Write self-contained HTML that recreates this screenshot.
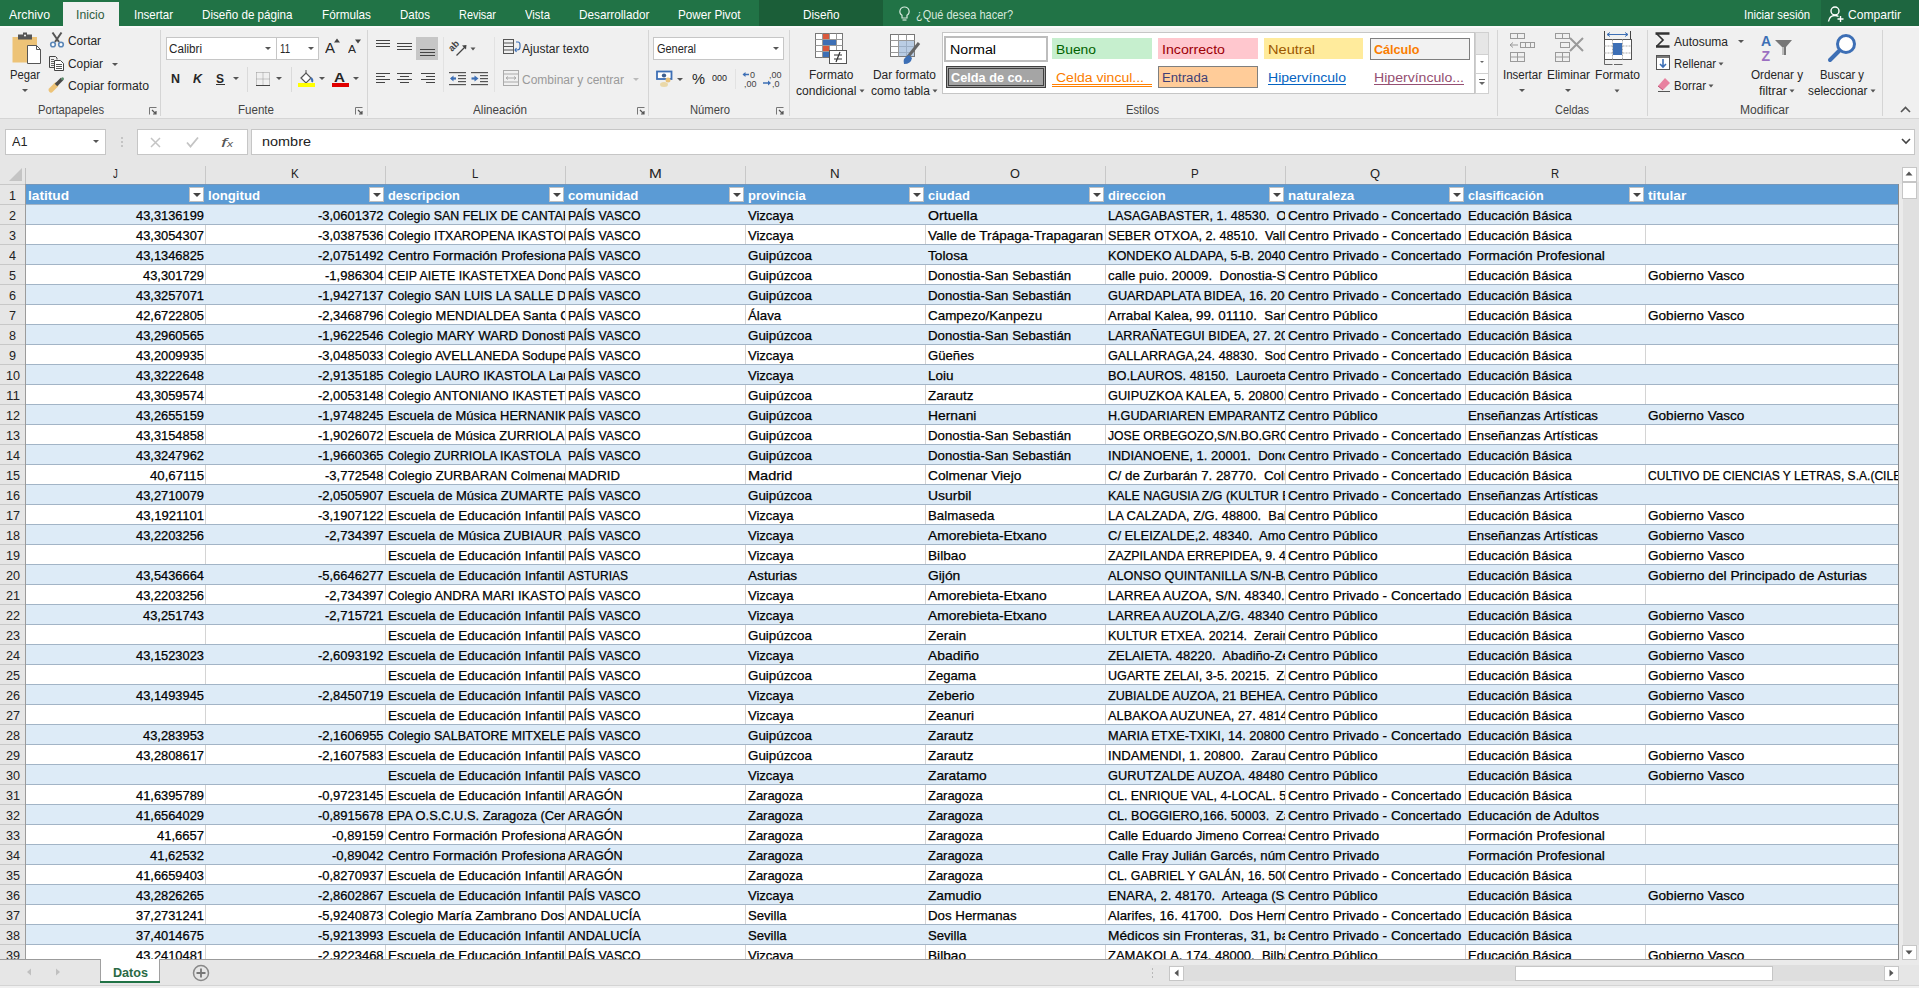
<!DOCTYPE html>
<html><head><meta charset="utf-8"><title>Excel</title>
<style>
html,body{margin:0;padding:0;width:1919px;height:988px;overflow:hidden;background:#E6E6E6;font-family:'Liberation Sans', sans-serif;}
.a{position:absolute;}
.t{position:absolute;white-space:pre;transform-origin:0 0;}
svg{position:absolute;overflow:visible;}
</style></head><body>
<div class="a" style="left:0px;top:0px;width:1919px;height:26px;background:#217346;"></div><div class="a" style="left:759px;top:0px;width:124px;height:26px;background:#1B5E38;"></div><div class="a" style="left:1821px;top:0px;width:98px;height:26px;background:#1E6640;"></div><div class="a" style="left:0px;top:26px;width:1919px;height:92px;background:#F0F0F0;"></div><div class="a" style="left:0px;top:26px;width:1919px;height:2px;background:#F9F9F9;"></div><div class="a" style="left:0px;top:118px;width:1919px;height:1px;background:#D5D5D5;"></div><div class="a" style="left:0px;top:119px;width:1919px;height:44px;background:#E6E6E6;"></div><div class="a" style="left:63px;top:2px;width:56px;height:26px;background:#F0F0F0;"></div><div class="t" style="left:9.00px;top:8.00px;font-size:13.0px;line-height:13.0px;color:#FFFFFF;transform:scaleX(0.9456);">Archivo</div><div class="t" style="left:76.00px;top:8.00px;font-size:13.0px;line-height:13.0px;color:#2E5D40;transform:scaleX(0.9388);">Inicio</div><div class="t" style="left:134.00px;top:8.00px;font-size:13.0px;line-height:13.0px;color:#FFFFFF;transform:scaleX(0.8848);">Insertar</div><div class="t" style="left:202.00px;top:8.00px;font-size:13.0px;line-height:13.0px;color:#FFFFFF;transform:scaleX(0.8942);">Diseño de página</div><div class="t" style="left:322.00px;top:8.00px;font-size:13.0px;line-height:13.0px;color:#FFFFFF;transform:scaleX(0.9043);">Fórmulas</div><div class="t" style="left:400.00px;top:8.00px;font-size:13.0px;line-height:13.0px;color:#FFFFFF;transform:scaleX(0.8832);">Datos</div><div class="t" style="left:459.00px;top:8.00px;font-size:13.0px;line-height:13.0px;color:#FFFFFF;transform:scaleX(0.8394);">Revisar</div><div class="t" style="left:524.50px;top:8.00px;font-size:13.0px;line-height:13.0px;color:#FFFFFF;transform:scaleX(0.8719);">Vista</div><div class="t" style="left:579.00px;top:8.00px;font-size:13.0px;line-height:13.0px;color:#FFFFFF;transform:scaleX(0.9033);">Desarrollador</div><div class="t" style="left:678.00px;top:8.00px;font-size:13.0px;line-height:13.0px;color:#FFFFFF;transform:scaleX(0.9009);">Power Pivot</div><div class="t" style="left:802.50px;top:8.00px;font-size:13.0px;line-height:13.0px;color:#FFFFFF;transform:scaleX(0.9019);">Diseño</div><svg style="left:899px;top:6px" width="11" height="16" viewBox="0 0 11 16"><path d="M5.5 1A4.5 4.5 0 0 0 3 9.3V12H8V9.3A4.5 4.5 0 0 0 5.5 1Z" fill="none" stroke="#D5E8DC" stroke-width="1.2"/><path d="M3.5 14H7.5" stroke="#D5E8DC" stroke-width="1.2"/></svg><div class="t" style="left:916.00px;top:8.00px;font-size:13.0px;line-height:13.0px;color:#D5E8DC;transform:scaleX(0.8442);">¿Qué desea hacer?</div><div class="t" style="left:1744.00px;top:8.00px;font-size:13.0px;line-height:13.0px;color:#FFFFFF;transform:scaleX(0.8699);">Iniciar sesión</div><svg style="left:1827px;top:6px" width="18" height="16" viewBox="0 0 18 16"><circle cx="8" cy="5" r="4" fill="none" stroke="#FFF" stroke-width="1.4"/><path d="M1.5 15.5Q2.5 9.5 8 9.5Q10 9.5 11.5 10.5" fill="none" stroke="#FFF" stroke-width="1.4"/><path d="M13.5 10V16M10.5 13H16.5" stroke="#FFF" stroke-width="1.4"/></svg><div class="t" style="left:1848.00px;top:8.00px;font-size:13.0px;line-height:13.0px;color:#FFFFFF;transform:scaleX(0.9286);">Compartir</div><div class="a" style="left:160px;top:30px;width:1px;height:86px;background:#D5D5D5;"></div><div class="a" style="left:367px;top:30px;width:1px;height:86px;background:#D5D5D5;"></div><div class="a" style="left:648px;top:30px;width:1px;height:86px;background:#D5D5D5;"></div><div class="a" style="left:789px;top:30px;width:1px;height:86px;background:#D5D5D5;"></div><div class="a" style="left:1497px;top:30px;width:1px;height:86px;background:#D5D5D5;"></div><div class="a" style="left:1647px;top:30px;width:1px;height:86px;background:#D5D5D5;"></div><div class="a" style="left:1882px;top:30px;width:1px;height:86px;background:#D5D5D5;"></div><div class="t" style="left:38.00px;top:103.84px;font-size:12.0px;line-height:12.0px;color:#444444;transform:scaleX(0.9333);">Portapapeles</div><div class="t" style="left:238.00px;top:103.84px;font-size:12.0px;line-height:12.0px;color:#444444;transform:scaleX(0.9636);">Fuente</div><div class="t" style="left:473.00px;top:103.84px;font-size:12.0px;line-height:12.0px;color:#444444;transform:scaleX(0.9752);">Alineación</div><div class="t" style="left:690.00px;top:103.84px;font-size:12.0px;line-height:12.0px;color:#444444;transform:scaleX(0.9370);">Número</div><div class="t" style="left:1126.00px;top:103.84px;font-size:12.0px;line-height:12.0px;color:#444444;transform:scaleX(0.9337);">Estilos</div><div class="t" style="left:1555.00px;top:103.84px;font-size:12.0px;line-height:12.0px;color:#444444;transform:scaleX(0.9101);">Celdas</div><div class="t" style="left:1740.00px;top:103.84px;font-size:12.0px;line-height:12.0px;color:#444444;transform:scaleX(1.0064);">Modificar</div><svg style="left:149px;top:107px" width="8" height="8" viewBox="0 0 8 8"><path d="M0.5 7.5V0.5H7.5" fill="none" stroke="#777" stroke-width="1"/><path d="M3 3L7 7M7 4V7H4" fill="none" stroke="#555" stroke-width="1.2"/></svg><svg style="left:355px;top:107px" width="8" height="8" viewBox="0 0 8 8"><path d="M0.5 7.5V0.5H7.5" fill="none" stroke="#777" stroke-width="1"/><path d="M3 3L7 7M7 4V7H4" fill="none" stroke="#555" stroke-width="1.2"/></svg><svg style="left:637px;top:107px" width="8" height="8" viewBox="0 0 8 8"><path d="M0.5 7.5V0.5H7.5" fill="none" stroke="#777" stroke-width="1"/><path d="M3 3L7 7M7 4V7H4" fill="none" stroke="#555" stroke-width="1.2"/></svg><svg style="left:776px;top:107px" width="8" height="8" viewBox="0 0 8 8"><path d="M0.5 7.5V0.5H7.5" fill="none" stroke="#777" stroke-width="1"/><path d="M3 3L7 7M7 4V7H4" fill="none" stroke="#555" stroke-width="1.2"/></svg><svg style="left:1900px;top:106px" width="11" height="7" viewBox="0 0 11 7"><path d="M1 6L5.5 1.5L10 6" fill="none" stroke="#555" stroke-width="1.6"/></svg><svg style="left:12px;top:32px" width="30" height="33" viewBox="0 0 30 33"><rect x="0.5" y="5" width="24.5" height="25.5" fill="#EDC377"/><rect x="6" y="2.5" width="14" height="5" fill="#555"/><rect x="11" y="0.5" width="4" height="3" fill="#555"/><circle cx="13" cy="3.5" r="1" fill="#FFF"/><path d="M15.5 13.5H24.5L28.5 17.5V31.5H15.5Z" fill="#FFF" stroke="#555"/><path d="M24.5 13.5V17.5H28.5" fill="none" stroke="#555"/></svg><div class="t" style="left:10.00px;top:68.84px;font-size:12.0px;line-height:12.0px;color:#262626;transform:scaleX(0.9366);">Pegar</div><div class="a" style="left:22px;top:89px;width:0;height:0;border-left:3px solid transparent;border-right:3px solid transparent;border-top:3px solid #555"></div><svg style="left:49px;top:32px" width="16" height="16" viewBox="0 0 16 16"><path d="M3.5 0.5L10 10M12.5 0.5L6 10" stroke="#555" stroke-width="2" fill="none"/><circle cx="4" cy="12.5" r="2.3" fill="#FFF" stroke="#5B87B8" stroke-width="1.6"/><circle cx="12" cy="12.5" r="2.3" fill="#FFF" stroke="#5B87B8" stroke-width="1.6"/></svg><div class="t" style="left:68.00px;top:34.84px;font-size:12.0px;line-height:12.0px;color:#262626;transform:scaleX(0.9897);">Cortar</div><svg style="left:49px;top:56px" width="16" height="15" viewBox="0 0 16 15"><path d="M0.5 0.5H6.5L8 2V3.5M0.5 0.5V11.5H5" fill="none" stroke="#444"/><path d="M2 3.5H5M2 5.5H5M2 7.5H5M2 9.5H5" stroke="#666"/><path d="M5.5 4.5H11.5L14.5 7.5V14.5H5.5Z" fill="#FFF" stroke="#444"/><path d="M7 8.5H13M7 10.5H13M7 12.5H13" stroke="#555"/></svg><div class="t" style="left:68.00px;top:57.84px;font-size:12.0px;line-height:12.0px;color:#262626;transform:scaleX(0.9898);">Copiar</div><div class="a" style="left:112px;top:63px;width:0;height:0;border-left:3px solid transparent;border-right:3px solid transparent;border-top:3px solid #555"></div><svg style="left:49px;top:77px" width="16" height="15" viewBox="0 0 16 15"><path d="M2 13L7 8" stroke="#EDC377" stroke-width="5" stroke-linecap="round"/><path d="M7 8L13 2" stroke="#4A4A4A" stroke-width="3.5"/><circle cx="13.5" cy="1.8" r="1.5" fill="#5A8A6A"/></svg><div class="t" style="left:68.00px;top:79.84px;font-size:12.0px;line-height:12.0px;color:#262626;transform:scaleX(1.0205);">Copiar formato</div><div class="a" style="left:166px;top:37px;width:153px;height:23px;background:#FFFFFF;border:1px solid #C6C6C6;box-sizing:border-box;"></div><div class="a" style="left:276px;top:38px;width:1px;height:21px;background:#C6C6C6;"></div><div class="t" style="left:169.00px;top:42.84px;font-size:12.0px;line-height:12.0px;color:#262626;transform:scaleX(0.9701);">Calibri</div><div class="a" style="left:265px;top:47px;width:0;height:0;border-left:3px solid transparent;border-right:3px solid transparent;border-top:3px solid #555"></div><div class="t" style="left:280.00px;top:42.84px;font-size:12.0px;line-height:12.0px;color:#262626;transform:scaleX(0.8020);">11</div><div class="a" style="left:308px;top:47px;width:0;height:0;border-left:3px solid transparent;border-right:3px solid transparent;border-top:3px solid #555"></div><div class="t" style="left:325.00px;top:41.15px;font-size:14px;line-height:14px;color:#262626;transform:scaleX(1.0702);">A</div><svg style="left:334px;top:38px" width="6" height="5" viewBox="0 0 6 5"><path d="M0 4.5L3 0.5L6 4.5Z" fill="#444"/></svg><div class="t" style="left:348.00px;top:43.69px;font-size:11px;line-height:11px;color:#262626;transform:scaleX(1.0894);">A</div><svg style="left:355px;top:39px" width="6" height="5" viewBox="0 0 6 5"><path d="M0 0.5L3 4.5L6 0.5Z" fill="#444"/></svg><div class="t" style="left:171.00px;top:72.00px;font-size:13px;line-height:13px;color:#262626;font-weight:700;transform:scaleX(0.9584);">N</div><div class="t" style="left:193.00px;top:72.00px;font-size:13px;line-height:13px;color:#262626;font-weight:700;transform:scaleX(0.9584);font-style:italic;">K</div><div class="t" style="left:216.00px;top:72.00px;font-size:13px;line-height:13px;color:#262626;font-weight:700;transform:scaleX(0.9225);">S</div><div class="a" style="left:216px;top:84px;width:9px;height:1px;background:#333;"></div><div class="a" style="left:233px;top:77px;width:0;height:0;border-left:3px solid transparent;border-right:3px solid transparent;border-top:3px solid #555"></div><div class="a" style="left:247px;top:67px;width:1px;height:25px;background:#DADADA;"></div><svg style="left:256px;top:72px" width="14" height="14" viewBox="0 0 14 14"><path d="M0.5 0.5H13.5V13.5M0.5 0.5V13.5M7 0.5V13.5M0.5 7H13.5" fill="none" stroke="#999" stroke-dasharray="1 1"/><path d="M0 13.5H14" stroke="#444"/></svg><div class="a" style="left:276px;top:77px;width:0;height:0;border-left:3px solid transparent;border-right:3px solid transparent;border-top:3px solid #555"></div><div class="a" style="left:291px;top:67px;width:1px;height:25px;background:#DADADA;"></div><svg style="left:298px;top:69px" width="17" height="19" viewBox="0 0 17 19"><path d="M3 9L8 4L13 9L8 14Z" fill="#FFF" stroke="#555" stroke-width="1.2"/><path d="M8 4V1" stroke="#555"/><path d="M13 9Q15 11 14 13" stroke="#3D6FB5" stroke-width="2" fill="none"/><rect x="0" y="14" width="17" height="4" fill="#FFFF00"/></svg><div class="a" style="left:319px;top:77px;width:0;height:0;border-left:3px solid transparent;border-right:3px solid transparent;border-top:3px solid #555"></div><div class="t" style="left:334.00px;top:71.00px;font-size:13px;line-height:13px;color:#262626;font-weight:700;transform:scaleX(1.1714);">A</div><div class="a" style="left:332px;top:83px;width:17px;height:4px;background:#E00000;"></div><div class="a" style="left:353px;top:77px;width:0;height:0;border-left:3px solid transparent;border-right:3px solid transparent;border-top:3px solid #555"></div><svg style="left:376px;top:40px" width="16" height="9" viewBox="0 0 16 9"><rect x="0" y="0" width="14" height="1" fill="#444"/><rect x="0" y="3" width="14" height="1" fill="#444"/><rect x="0" y="6" width="14" height="1" fill="#444"/></svg><svg style="left:397px;top:43px" width="16" height="9" viewBox="0 0 16 9"><rect x="0" y="0" width="15" height="1" fill="#444"/><rect x="0" y="3" width="15" height="1" fill="#444"/><rect x="0" y="6" width="15" height="1" fill="#444"/></svg><div class="a" style="left:416px;top:37px;width:22px;height:23px;background:#C6C6C6;"></div><svg style="left:420px;top:49px" width="16" height="9" viewBox="0 0 16 9"><rect x="0" y="0" width="15" height="1" fill="#444"/><rect x="0" y="3" width="15" height="1" fill="#444"/><rect x="0" y="6" width="15" height="1" fill="#444"/></svg><svg style="left:449px;top:39px" width="22" height="18" viewBox="0 0 22 18"><text x="3" y="13" font-family="Liberation Sans" font-weight="bold" font-size="9.5" fill="#444" transform="rotate(-45 3 13)">ab</text><path d="M7.5 16.5L16 8" stroke="#444" stroke-width="1.3"/><path d="M13 6.5L17.5 6L17 10.5Z" fill="#444"/></svg><svg style="left:470px;top:47px" width="6" height="4" viewBox="0 0 6 4"><path d="M0.5 0.5H5.5L3 3.5Z" fill="#555"/></svg><div class="a" style="left:443px;top:37px;width:1px;height:55px;background:#E2E2E2;"></div><div class="a" style="left:494px;top:37px;width:1px;height:55px;background:#E2E2E2;"></div><svg style="left:376px;top:73px" width="16" height="12" viewBox="0 0 16 12"><rect x="0" y="0" width="14" height="1" fill="#444"/><rect x="0" y="3" width="9" height="1" fill="#444"/><rect x="0" y="6" width="14" height="1" fill="#444"/><rect x="0" y="9" width="9" height="1" fill="#444"/></svg><svg style="left:397px;top:73px" width="16" height="12" viewBox="0 0 16 12"><rect x="0" y="0" width="15" height="1" fill="#444"/><rect x="3" y="3" width="9" height="1" fill="#444"/><rect x="0" y="6" width="15" height="1" fill="#444"/><rect x="3" y="9" width="9" height="1" fill="#444"/></svg><svg style="left:420px;top:73px" width="16" height="12" viewBox="0 0 16 12"><rect x="1" y="0" width="14" height="1" fill="#444"/><rect x="6" y="3" width="9" height="1" fill="#444"/><rect x="1" y="6" width="14" height="1" fill="#444"/><rect x="6" y="9" width="9" height="1" fill="#444"/></svg><svg style="left:449px;top:71px" width="18" height="15" viewBox="0 0 18 15"><rect x="0" y="1" width="17" height="1.2" fill="#555"/><rect x="9" y="4" width="8" height="1.2" fill="#555"/><rect x="9" y="7" width="8" height="1.2" fill="#555"/><rect x="9" y="10" width="8" height="1.2" fill="#555"/><rect x="0" y="13" width="17" height="1.2" fill="#555"/><path d="M7 7.5H2.5" stroke="#3D6FB5" stroke-width="2.2"/><path d="M4.5 4.5L1 7.5L4.5 10.5Z" fill="#3D6FB5"/></svg><svg style="left:471px;top:71px" width="18" height="15" viewBox="0 0 18 15"><rect x="0" y="1" width="17" height="1.2" fill="#555"/><rect x="9" y="4" width="8" height="1.2" fill="#555"/><rect x="9" y="7" width="8" height="1.2" fill="#555"/><rect x="9" y="10" width="8" height="1.2" fill="#555"/><rect x="0" y="13" width="17" height="1.2" fill="#555"/><path d="M0.5 7.5H5" stroke="#3D6FB5" stroke-width="2.2"/><path d="M3.5 4.5L7.5 7.5L3.5 10.5Z" fill="#3D6FB5"/></svg><svg style="left:503px;top:39px" width="18" height="16" viewBox="0 0 18 16"><rect x="0.5" y="0.5" width="10" height="14" fill="none" stroke="#555"/><path d="M1 4H10M1 7.5H10M1 11H10" stroke="#555"/><path d="M13 3H15Q17 3 17 6V8Q17 11 14 11H12M13.5 9L12 11L13.5 13" stroke="#3D6FB5" stroke-width="1.2" fill="none"/></svg><div class="t" style="left:522.00px;top:42.84px;font-size:12.0px;line-height:12.0px;color:#262626;transform:scaleX(1.0045);">Ajustar texto</div><svg style="left:503px;top:70px" width="16" height="16" viewBox="0 0 16 16"><rect x="0.5" y="0.5" width="15" height="15" fill="none" stroke="#AAA"/><path d="M1 4H15M1 12H15M3 8H13M3 8L5 6.5M3 8L5 9.5M13 8L11 6.5M13 8L11 9.5" stroke="#AAA" fill="none"/></svg><div class="t" style="left:522.00px;top:73.84px;font-size:12.0px;line-height:12.0px;color:#9A9A9A;">Combinar y centrar</div><div class="a" style="left:633px;top:78px;width:0;height:0;border-left:3px solid transparent;border-right:3px solid transparent;border-top:3px solid #BBB"></div><div class="a" style="left:653px;top:37px;width:131px;height:23px;background:#FFFFFF;border:1px solid #C6C6C6;box-sizing:border-box;"></div><div class="t" style="left:657.00px;top:42.84px;font-size:12.0px;line-height:12.0px;color:#262626;transform:scaleX(0.9133);">General</div><div class="a" style="left:773px;top:47px;width:0;height:0;border-left:3px solid transparent;border-right:3px solid transparent;border-top:3px solid #555"></div><svg style="left:656px;top:70px" width="17" height="18" viewBox="0 0 17 18"><rect x="1" y="1.5" width="14.5" height="7.5" fill="#FFF" stroke="#3D6FB5" stroke-width="1.8"/><ellipse cx="8" cy="5.5" rx="2.2" ry="2" fill="#3D5F8F"/><circle cx="12" cy="10" r="2.5" fill="#E8C27A"/><ellipse cx="8" cy="14.5" rx="4" ry="2.5" fill="#EAD8A8"/></svg><div class="a" style="left:677px;top:78px;width:0;height:0;border-left:3px solid transparent;border-right:3px solid transparent;border-top:3px solid #555"></div><div class="t" style="left:692.00px;top:72.15px;font-size:14px;line-height:14px;color:#262626;transform:scaleX(1.0439);">%</div><div class="t" style="left:712.00px;top:74.38px;font-size:9px;line-height:9px;color:#262626;transform:scaleX(0.9979);">000</div><div class="a" style="left:735px;top:69px;width:1px;height:20px;background:#E2E2E2;"></div><svg style="left:741px;top:70px" width="17" height="18" viewBox="0 0 17 18"><text x="9" y="8" font-family="Liberation Sans" font-size="9" fill="#444">0</text><text x="3" y="16.5" font-family="Liberation Sans" font-size="9" fill="#444">,00</text><path d="M8 4.5H2.5" stroke="#3D6FB5" stroke-width="1.5"/><path d="M4.5 2L1.5 4.5L4.5 7Z" fill="#3D6FB5"/></svg><svg style="left:762px;top:70px" width="18" height="18" viewBox="0 0 18 18"><text x="7" y="8" font-family="Liberation Sans" font-size="9" fill="#444">,00</text><text x="10" y="16.5" font-family="Liberation Sans" font-size="9" fill="#444">,0</text><path d="M1 13H7" stroke="#3D6FB5" stroke-width="1.5"/><path d="M6 10.5L9 13L6 15.5Z" fill="#3D6FB5"/></svg><svg style="left:815px;top:33px" width="33" height="32" viewBox="0 0 33 32"><g stroke="#777" stroke-width="1" fill="#FFF"><rect x="0.5" y="0.5" width="27" height="24"/></g><path d="M0.5 6.5H27.5M0.5 12.5H27.5M0.5 18.5H27.5M7.5 0.5V24.5M14.5 0.5V24.5M21.5 0.5V24.5" stroke="#999" fill="none"/><rect x="8" y="1" width="6" height="5" fill="#D9583B"/><rect x="8" y="7" width="13" height="5" fill="#3D6FB5"/><rect x="8" y="13" width="6" height="5" fill="#D9583B"/><rect x="8" y="19" width="6" height="5" fill="#3D6FB5"/><rect x="14.5" y="17.5" width="17" height="13" fill="#FFF" stroke="#555"/><path d="M19 22H27M19 26H27M25 19L21 29" stroke="#333" stroke-width="1.2"/></svg><div class="t" style="left:808.50px;top:68.84px;font-size:12.0px;line-height:12.0px;color:#262626;transform:scaleX(0.9958);">Formato</div><div class="t" style="left:795.50px;top:84.84px;font-size:12.0px;line-height:12.0px;color:#262626;transform:scaleX(1.0075);">condicional</div><svg style="left:859px;top:89px" width="6" height="4" viewBox="0 0 6 4"><path d="M0.5 0.5H5.5L3 3.5Z" fill="#555"/></svg><svg style="left:890px;top:34px" width="31" height="31" viewBox="0 0 31 31"><rect x="0.5" y="0.5" width="24" height="22" fill="#FFF" stroke="#777"/><path d="M0.5 6.5H24.5M0.5 12.5H24.5M0.5 18.5H24.5M8.5 0.5V22.5M16.5 0.5V22.5" stroke="#999"/><rect x="9" y="7" width="15" height="15" fill="#9DB8D9" opacity="0.7"/><path d="M29 9L17 24" stroke="#666" stroke-width="3"/><path d="M19 21Q12 24 14 30Q21 30 22 24Z" fill="#3D6FB5"/></svg><div class="t" style="left:872.50px;top:68.84px;font-size:12.0px;line-height:12.0px;color:#262626;transform:scaleX(0.9943);">Dar formato</div><div class="t" style="left:870.50px;top:84.84px;font-size:12.0px;line-height:12.0px;color:#262626;transform:scaleX(1.0051);">como tabla</div><svg style="left:932px;top:89px" width="6" height="4" viewBox="0 0 6 4"><path d="M0.5 0.5H5.5L3 3.5Z" fill="#555"/></svg><div class="a" style="left:942px;top:32px;width:533px;height:62px;background:#FFFFFF;border:1px solid #C6C6C6;box-sizing:border-box;"></div><div class="a" style="left:944px;top:36px;width:104px;height:26px;background:#FFFFFF;border:2px solid #BDBDBD;box-sizing:border-box;"></div><div class="t" style="left:950.00px;top:43.84px;font-size:12.0px;line-height:12.0px;color:#000;transform:scaleX(1.1895);">Normal</div><div class="a" style="left:1052px;top:38px;width:100px;height:21px;background:#C6EFCE;"></div><div class="t" style="left:1056.00px;top:43.84px;font-size:12.0px;line-height:12.0px;color:#006100;transform:scaleX(1.1526);">Bueno</div><div class="a" style="left:1158px;top:38px;width:100px;height:21px;background:#FFC7CE;"></div><div class="t" style="left:1162.00px;top:43.84px;font-size:12.0px;line-height:12.0px;color:#9C0006;transform:scaleX(1.1807);">Incorrecto</div><div class="a" style="left:1264px;top:38px;width:99px;height:21px;background:#FFEB9C;"></div><div class="t" style="left:1268.00px;top:43.84px;font-size:12.0px;line-height:12.0px;color:#9C5700;transform:scaleX(1.2149);">Neutral</div><div class="a" style="left:1370px;top:38px;width:100px;height:22px;background:#F2F2F2;border:1px solid #7F7F7F;box-sizing:border-box;"></div><div class="t" style="left:1374.00px;top:43.84px;font-size:12.0px;line-height:12.0px;color:#FA7D00;font-weight:700;transform:scaleX(1.0497);">Cálculo</div><div class="a" style="left:946px;top:66px;width:100px;height:22px;background:#A5A5A5;border:3px double #3F3F3F;box-sizing:border-box;"></div><div class="t" style="left:951.00px;top:71.84px;font-size:12.0px;line-height:12.0px;color:#FFFFFF;font-weight:700;transform:scaleX(1.0600);">Celda de co...</div><div class="t" style="left:1056.00px;top:71.84px;font-size:12.0px;line-height:12.0px;color:#FA7D00;transform:scaleX(1.1675);">Celda vincul...</div><div class="a" style="left:1052px;top:84px;width:100px;height:1px;background:#FF8001;"></div><div class="a" style="left:1052px;top:86px;width:100px;height:1px;background:#FF8001;"></div><div class="a" style="left:1158px;top:66px;width:100px;height:22px;background:#FFCC99;border:1px solid #7F7F7F;box-sizing:border-box;"></div><div class="t" style="left:1162.00px;top:71.84px;font-size:12.0px;line-height:12.0px;color:#3F3F76;transform:scaleX(1.0944);">Entrada</div><div class="t" style="left:1268.00px;top:71.84px;font-size:12.0px;line-height:12.0px;color:#0563C1;transform:scaleX(1.1694);">Hipervínculo</div><div class="a" style="left:1268px;top:84px;width:78px;height:1px;background:#0563C1;"></div><div class="t" style="left:1374.00px;top:71.84px;font-size:12.0px;line-height:12.0px;color:#954F72;transform:scaleX(1.1734);">Hipervínculo...</div><div class="a" style="left:1374px;top:84px;width:90px;height:1px;background:#954F72;"></div><div class="a" style="left:1475px;top:32px;width:14px;height:62px;background:#FFFFFF;border:1px solid #D0D0D0;box-sizing:border-box;"></div><div class="a" style="left:1476px;top:33px;width:12px;height:21px;background:#E6E6E6;"></div><div class="a" style="left:1475px;top:54px;width:14px;height:1px;background:#D0D0D0;"></div><div class="a" style="left:1475px;top:73px;width:14px;height:1px;background:#D0D0D0;"></div><div class="a" style="left:1480px;top:61px;width:0;height:0;border-left:2px solid transparent;border-right:2px solid transparent;border-top:2px solid #666"></div><div class="a" style="left:1479px;top:79px;width:6px;height:1px;background:#666;"></div><div class="a" style="left:1479px;top:82px;width:0;height:0;border-left:3px solid transparent;border-right:3px solid transparent;border-top:3px solid #666"></div><svg style="left:1509px;top:32px" width="30" height="30" viewBox="0 0 30 30"><g fill="none" stroke="#9A9A9A"><rect x="1.5" y="1.5" width="14" height="5"/><path d="M8.5 1.5V6.5"/><rect x="11.5" y="10.5" width="14" height="5"/><path d="M16.5 10.5V15.5M21.5 10.5V15.5"/><path d="M1 13H9M4 10.5L1 13L4 15.5"/><rect x="1.5" y="20.5" width="14" height="9"/><path d="M1.5 25H15.5M8.5 20.5V29.5"/></g></svg><div class="t" style="left:1503.00px;top:68.84px;font-size:12.0px;line-height:12.0px;color:#262626;transform:scaleX(0.9585);">Insertar</div><div class="a" style="left:1519px;top:89px;width:0;height:0;border-left:3px solid transparent;border-right:3px solid transparent;border-top:3px solid #555"></div><svg style="left:1554px;top:32px" width="32" height="30" viewBox="0 0 32 30"><g fill="none" stroke="#9A9A9A"><rect x="1.5" y="1.5" width="14" height="5"/><path d="M8.5 1.5V6.5"/><rect x="6.5" y="10.5" width="9" height="5"/><rect x="1.5" y="20.5" width="14" height="9"/><path d="M1.5 25H15.5M8.5 20.5V29.5"/><path d="M16 6L29 19M29 6L16 19" stroke-width="2"/></g></svg><div class="t" style="left:1547.00px;top:68.84px;font-size:12.0px;line-height:12.0px;color:#262626;transform:scaleX(0.9921);">Eliminar</div><div class="a" style="left:1565px;top:89px;width:0;height:0;border-left:3px solid transparent;border-right:3px solid transparent;border-top:3px solid #555"></div><svg style="left:1603px;top:31px" width="31" height="34" viewBox="0 0 31 34"><path d="M4 3.5H25M4 3.5L7 1.5M4 3.5L7 5.5M25 3.5L22 1.5M25 3.5L22 5.5" stroke="#3D6FB5" fill="none"/><path d="M1.5 0V8M27.5 0V8" stroke="#444"/><rect x="1.5" y="8.5" width="27" height="20" fill="#FFF" stroke="#555"/><path d="M1.5 15H28.5M1.5 22H28.5M9.5 8.5V28.5M19.5 8.5V28.5" stroke="#AAA" stroke-dasharray="2 1"/><rect x="10" y="12" width="9" height="12" fill="#3D6FB5"/><path d="M1.5 28.5V33.5H9.5M11 33.5H19.5" stroke="#666" fill="none"/></svg><div class="t" style="left:1595.00px;top:68.84px;font-size:12.0px;line-height:12.0px;color:#262626;transform:scaleX(1.0070);">Formato</div><svg style="left:1614px;top:89px" width="6" height="4" viewBox="0 0 6 4"><path d="M0.5 0.5H5.5L3 3.5Z" fill="#555"/></svg><svg style="left:1654px;top:32px" width="17" height="16" viewBox="0 0 17 16"><path d="M1.5 1.5H15.5M2 14.5H15.5" stroke="#333" stroke-width="2.4"/><path d="M2.5 1.5L9 8L2.5 14.5" stroke="#333" stroke-width="1.7" fill="none"/></svg><div class="t" style="left:1674.00px;top:35.84px;font-size:12.0px;line-height:12.0px;color:#262626;">Autosuma</div><div class="a" style="left:1738px;top:40px;width:0;height:0;border-left:3px solid transparent;border-right:3px solid transparent;border-top:3px solid #555"></div><svg style="left:1656px;top:55px" width="15" height="16" viewBox="0 0 15 16"><rect x="0.5" y="0.5" width="13" height="14" fill="#FFF" stroke="#555"/><rect x="1" y="1" width="12" height="2" fill="#777"/><path d="M7 4V12M4 9L7 12L10 9" stroke="#3D6FB5" stroke-width="1.6" fill="none"/></svg><div class="t" style="left:1674.00px;top:57.84px;font-size:12.0px;line-height:12.0px;color:#262626;transform:scaleX(0.9395);">Rellenar</div><svg style="left:1718px;top:62px" width="6" height="4" viewBox="0 0 6 4"><path d="M0.5 0.5H5.5L3 3.5Z" fill="#555"/></svg><svg style="left:1656px;top:76px" width="16" height="17" viewBox="0 0 16 17"><path d="M2 10L9 2L14 7L7 14Z" fill="#E882A0"/><path d="M2 10L7 14" stroke="#C05075"/><path d="M2 15.5H14" stroke="#555"/></svg><div class="t" style="left:1674.00px;top:79.84px;font-size:12.0px;line-height:12.0px;color:#262626;transform:scaleX(0.9597);">Borrar</div><svg style="left:1708px;top:84px" width="6" height="4" viewBox="0 0 6 4"><path d="M0.5 0.5H5.5L3 3.5Z" fill="#555"/></svg><svg style="left:1761px;top:33px" width="33" height="30" viewBox="0 0 33 30"><text x="0" y="13" font-family="Liberation Sans" font-weight="bold" font-size="14" fill="#3D6FB5">A</text><text x="0.5" y="28" font-family="Liberation Sans" font-weight="bold" font-size="14" fill="#9B6FC1">Z</text><path d="M14 7H31L25 14V22H21V14Z" fill="#777"/><path d="M22 14V23" stroke="#FFF" stroke-width="1"/></svg><div class="t" style="left:1751.00px;top:68.84px;font-size:12.0px;line-height:12.0px;color:#262626;transform:scaleX(0.9745);">Ordenar y</div><div class="t" style="left:1759.00px;top:84.84px;font-size:12.0px;line-height:12.0px;color:#262626;transform:scaleX(1.0498);">filtrar</div><svg style="left:1789px;top:89px" width="6" height="4" viewBox="0 0 6 4"><path d="M0.5 0.5H5.5L3 3.5Z" fill="#555"/></svg><svg style="left:1827px;top:33px" width="30" height="30" viewBox="0 0 30 30"><circle cx="19" cy="11" r="8.5" fill="#FFF" stroke="#3D6FB5" stroke-width="3"/><path d="M12.5 17.5L3 27" stroke="#3D6FB5" stroke-width="4" stroke-linecap="round"/></svg><div class="t" style="left:1820.00px;top:68.84px;font-size:12.0px;line-height:12.0px;color:#262626;transform:scaleX(0.9424);">Buscar y</div><div class="t" style="left:1808.00px;top:84.84px;font-size:12.0px;line-height:12.0px;color:#262626;transform:scaleX(0.9802);">seleccionar</div><svg style="left:1870px;top:89px" width="6" height="4" viewBox="0 0 6 4"><path d="M0.5 0.5H5.5L3 3.5Z" fill="#555"/></svg><div class="a" style="left:5px;top:129px;width:101px;height:26px;background:#FFFFFF;border:1px solid #C6C6C6;box-sizing:border-box;"></div><div class="a" style="left:137px;top:129px;width:111px;height:26px;background:#FFFFFF;border:1px solid #C6C6C6;box-sizing:border-box;"></div><div class="a" style="left:251px;top:129px;width:1664px;height:26px;background:#FFFFFF;border:1px solid #C6C6C6;box-sizing:border-box;"></div><div class="t" style="left:12.00px;top:135.00px;font-size:13.0px;line-height:13.0px;color:#222;transform:scaleX(0.9745);">A1</div><div class="a" style="left:93px;top:140px;width:0;height:0;border-left:3px solid transparent;border-right:3px solid transparent;border-top:3px solid #555"></div><div class="a" style="left:121px;top:137px;width:2px;height:2px;background:#C4C4C4;"></div><div class="a" style="left:121px;top:141px;width:2px;height:2px;background:#C4C4C4;"></div><div class="a" style="left:121px;top:145px;width:2px;height:2px;background:#C4C4C4;"></div><svg style="left:150px;top:137px" width="11" height="11" viewBox="0 0 11 11"><path d="M1 1L10 10M10 1L1 10" stroke="#C4C4C4" stroke-width="1.5"/></svg><svg style="left:186px;top:136px" width="13" height="12" viewBox="0 0 13 12"><path d="M1 6.5L4.5 10.5L12 1.5" stroke="#C4C4C4" stroke-width="1.8" fill="none"/></svg><div class="t" style="left:221.00px;top:136.00px;font-size:13px;line-height:13px;color:#555;transform:scaleX(1.6552);font-style:italic;font-family:"Liberation Serif";">f</div><div class="t" style="left:227.00px;top:140.38px;font-size:9px;line-height:9px;color:#555;transform:scaleX(1.3333);font-style:italic;font-family:"Liberation Serif";">x</div><div class="t" style="left:262.00px;top:135.00px;font-size:13.0px;line-height:13.0px;color:#222;transform:scaleX(1.1117);">nombre</div><svg style="left:1901px;top:138px" width="10" height="6" viewBox="0 0 10 6"><path d="M1 1L5 5L9 1" stroke="#444" stroke-width="1.6" fill="none"/></svg><div class="a" style="left:0px;top:163px;width:1899px;height:21px;background:#E6E6E6;"></div><div class="t" style="left:112.61px;top:167.49px;font-size:13.6px;line-height:13.6px;color:#222;transform:scaleX(0.7037);">J</div><div class="a" style="left:205px;top:166px;width:1px;height:18px;background:#C8C8C8;"></div><div class="t" style="left:291.10px;top:167.49px;font-size:13.6px;line-height:13.6px;color:#222;transform:scaleX(0.8584);">K</div><div class="a" style="left:385px;top:166px;width:1px;height:18px;background:#C8C8C8;"></div><div class="t" style="left:471.85px;top:167.49px;font-size:13.6px;line-height:13.6px;color:#222;transform:scaleX(0.8339);">L</div><div class="a" style="left:565px;top:166px;width:1px;height:18px;background:#C8C8C8;"></div><div class="t" style="left:648.59px;top:167.49px;font-size:13.6px;line-height:13.6px;color:#222;transform:scaleX(1.1321);">M</div><div class="a" style="left:745px;top:166px;width:1px;height:18px;background:#C8C8C8;"></div><div class="t" style="left:830.16px;top:167.49px;font-size:13.6px;line-height:13.6px;color:#222;transform:scaleX(0.9852);">N</div><div class="a" style="left:925px;top:166px;width:1px;height:18px;background:#C8C8C8;"></div><div class="t" style="left:1010.03px;top:167.49px;font-size:13.6px;line-height:13.6px;color:#222;transform:scaleX(0.9389);">O</div><div class="a" style="left:1105px;top:166px;width:1px;height:18px;background:#C8C8C8;"></div><div class="t" style="left:1191.13px;top:167.49px;font-size:13.6px;line-height:13.6px;color:#222;transform:scaleX(0.8536);">P</div><div class="a" style="left:1285px;top:166px;width:1px;height:18px;background:#C8C8C8;"></div><div class="t" style="left:1369.95px;top:167.49px;font-size:13.6px;line-height:13.6px;color:#222;transform:scaleX(0.9541);">Q</div><div class="a" style="left:1465px;top:166px;width:1px;height:18px;background:#C8C8C8;"></div><div class="t" style="left:1550.93px;top:167.49px;font-size:13.6px;line-height:13.6px;color:#222;transform:scaleX(0.8287);">R</div><div class="a" style="left:1645px;top:166px;width:1px;height:18px;background:#C8C8C8;"></div><svg style="left:9px;top:168px" width="14" height="14" viewBox="0 0 14 14"><path d="M13 0V13H0Z" fill="#C4C4C4"/></svg><div class="a" style="left:0px;top:184px;width:25px;height:776px;background:#E6E6E6;"></div><div class="a" style="left:25px;top:168px;width:1px;height:16px;background:#C0C0C0;"></div><div class="a" style="left:25px;top:184px;width:1px;height:776px;background:#9B9B9B;"></div><div class="a" style="left:26px;top:184px;width:1872px;height:20px;background:#5B9BD5;"></div><div class="a" style="left:26px;top:184px;width:1872px;height:1px;background:#7396BA;"></div><div class="a" style="left:0px;top:184px;width:25px;height:1px;background:#C8C8C8;"></div><div class="t" style="left:9.00px;top:189.49px;font-size:13.6px;line-height:13.6px;color:#222;transform:scaleX(0.9256);">1</div><div class="a" style="left:26px;top:184px;width:179px;height:20px;overflow:hidden"><div class="t" style="left:2.00px;top:5.49px;font-size:13.6px;line-height:13.6px;color:#FFFFFF;font-weight:700;transform:scaleX(1.0072);">latitud</div></div><div class="a" style="left:189px;top:187px;width:15px;height:15px;background:#FFFFFF;border:1px solid #BFBFBF;box-sizing:border-box;"></div><div class="a" style="left:193px;top:193px;width:0;height:0;border-left:4px solid transparent;border-right:4px solid transparent;border-top:4px solid #444"></div><div class="a" style="left:206px;top:184px;width:179px;height:20px;overflow:hidden"><div class="t" style="left:2.00px;top:5.49px;font-size:13.6px;line-height:13.6px;color:#FFFFFF;font-weight:700;transform:scaleX(0.9707);">longitud</div></div><div class="a" style="left:369px;top:187px;width:15px;height:15px;background:#FFFFFF;border:1px solid #BFBFBF;box-sizing:border-box;"></div><div class="a" style="left:373px;top:193px;width:0;height:0;border-left:4px solid transparent;border-right:4px solid transparent;border-top:4px solid #444"></div><div class="a" style="left:386px;top:184px;width:179px;height:20px;overflow:hidden"><div class="t" style="left:2.00px;top:5.49px;font-size:13.6px;line-height:13.6px;color:#FFFFFF;font-weight:700;transform:scaleX(0.9405);">descripcion</div></div><div class="a" style="left:549px;top:187px;width:15px;height:15px;background:#FFFFFF;border:1px solid #BFBFBF;box-sizing:border-box;"></div><div class="a" style="left:553px;top:193px;width:0;height:0;border-left:4px solid transparent;border-right:4px solid transparent;border-top:4px solid #444"></div><div class="a" style="left:566px;top:184px;width:179px;height:20px;overflow:hidden"><div class="t" style="left:2.00px;top:5.49px;font-size:13.6px;line-height:13.6px;color:#FFFFFF;font-weight:700;transform:scaleX(0.9713);">comunidad</div></div><div class="a" style="left:729px;top:187px;width:15px;height:15px;background:#FFFFFF;border:1px solid #BFBFBF;box-sizing:border-box;"></div><div class="a" style="left:733px;top:193px;width:0;height:0;border-left:4px solid transparent;border-right:4px solid transparent;border-top:4px solid #444"></div><div class="a" style="left:746px;top:184px;width:179px;height:20px;overflow:hidden"><div class="t" style="left:2.00px;top:5.49px;font-size:13.6px;line-height:13.6px;color:#FFFFFF;font-weight:700;transform:scaleX(0.9559);">provincia</div></div><div class="a" style="left:909px;top:187px;width:15px;height:15px;background:#FFFFFF;border:1px solid #BFBFBF;box-sizing:border-box;"></div><div class="a" style="left:913px;top:193px;width:0;height:0;border-left:4px solid transparent;border-right:4px solid transparent;border-top:4px solid #444"></div><div class="a" style="left:926px;top:184px;width:179px;height:20px;overflow:hidden"><div class="t" style="left:2.00px;top:5.49px;font-size:13.6px;line-height:13.6px;color:#FFFFFF;font-weight:700;transform:scaleX(0.9548);">ciudad</div></div><div class="a" style="left:1089px;top:187px;width:15px;height:15px;background:#FFFFFF;border:1px solid #BFBFBF;box-sizing:border-box;"></div><div class="a" style="left:1093px;top:193px;width:0;height:0;border-left:4px solid transparent;border-right:4px solid transparent;border-top:4px solid #444"></div><div class="a" style="left:1106px;top:184px;width:179px;height:20px;overflow:hidden"><div class="t" style="left:2.00px;top:5.49px;font-size:13.6px;line-height:13.6px;color:#FFFFFF;font-weight:700;transform:scaleX(0.9533);">direccion</div></div><div class="a" style="left:1269px;top:187px;width:15px;height:15px;background:#FFFFFF;border:1px solid #BFBFBF;box-sizing:border-box;"></div><div class="a" style="left:1273px;top:193px;width:0;height:0;border-left:4px solid transparent;border-right:4px solid transparent;border-top:4px solid #444"></div><div class="a" style="left:1286px;top:184px;width:179px;height:20px;overflow:hidden"><div class="t" style="left:2.00px;top:5.49px;font-size:13.6px;line-height:13.6px;color:#FFFFFF;font-weight:700;transform:scaleX(0.9864);">naturaleza</div></div><div class="a" style="left:1449px;top:187px;width:15px;height:15px;background:#FFFFFF;border:1px solid #BFBFBF;box-sizing:border-box;"></div><div class="a" style="left:1453px;top:193px;width:0;height:0;border-left:4px solid transparent;border-right:4px solid transparent;border-top:4px solid #444"></div><div class="a" style="left:1466px;top:184px;width:179px;height:20px;overflow:hidden"><div class="t" style="left:2.00px;top:5.49px;font-size:13.6px;line-height:13.6px;color:#FFFFFF;font-weight:700;transform:scaleX(0.9264);">clasificación</div></div><div class="a" style="left:1629px;top:187px;width:15px;height:15px;background:#FFFFFF;border:1px solid #BFBFBF;box-sizing:border-box;"></div><div class="a" style="left:1633px;top:193px;width:0;height:0;border-left:4px solid transparent;border-right:4px solid transparent;border-top:4px solid #444"></div><div class="a" style="left:1646px;top:184px;width:252px;height:20px;overflow:hidden"><div class="t" style="left:2.00px;top:5.49px;font-size:13.6px;line-height:13.6px;color:#FFFFFF;font-weight:700;transform:scaleX(1.0154);">titular</div></div><div class="a" style="left:26px;top:205px;width:1872px;height:19px;background:#DDEBF7;"></div><div class="a" style="left:26px;top:204px;width:1872px;height:1px;background:#A2B4C6;"></div><div class="a" style="left:0px;top:204px;width:25px;height:1px;background:#C8C8C8;"></div><div class="t" style="left:9.00px;top:209.49px;font-size:13.6px;line-height:13.6px;color:#222;transform:scaleX(0.9256);">2</div><div class="a" style="left:26px;top:205px;width:179px;height:19px;overflow:hidden"><div class="t" style="left:110.00px;top:4.49px;font-size:13.6px;line-height:13.6px;color:#000;transform:scaleX(0.9467);-webkit-text-stroke:0.25px #000;">43,3136199</div></div><div class="a" style="left:206px;top:205px;width:179px;height:19px;overflow:hidden"><div class="t" style="left:112.41px;top:4.49px;font-size:13.6px;line-height:13.6px;color:#000;transform:scaleX(0.9534);-webkit-text-stroke:0.25px #000;">-3,0601372</div></div><div class="a" style="left:386px;top:205px;width:179px;height:19px;overflow:hidden"><div class="t" style="left:2.00px;top:4.49px;font-size:13.6px;line-height:13.6px;color:#000;transform:scaleX(0.9155);-webkit-text-stroke:0.25px #000;">Colegio SAN FELIX DE CANTABRIA</div></div><div class="a" style="left:566px;top:205px;width:179px;height:19px;overflow:hidden"><div class="t" style="left:2.00px;top:4.49px;font-size:13.6px;line-height:13.6px;color:#000;transform:scaleX(0.9026);-webkit-text-stroke:0.25px #000;">PAÍS VASCO</div></div><div class="a" style="left:746px;top:205px;width:179px;height:19px;overflow:hidden"><div class="t" style="left:2.00px;top:4.49px;font-size:13.6px;line-height:13.6px;color:#000;transform:scaleX(0.9582);-webkit-text-stroke:0.25px #000;">Vizcaya</div></div><div class="a" style="left:926px;top:205px;width:179px;height:19px;overflow:hidden"><div class="t" style="left:2.00px;top:4.49px;font-size:13.6px;line-height:13.6px;color:#000;transform:scaleX(1.0418);-webkit-text-stroke:0.25px #000;">Ortuella</div></div><div class="a" style="left:1106px;top:205px;width:179px;height:19px;overflow:hidden"><div class="t" style="left:2.00px;top:4.49px;font-size:13.6px;line-height:13.6px;color:#000;transform:scaleX(0.9332);-webkit-text-stroke:0.25px #000;">LASAGABASTER, 1. 48530.  Ortuella</div></div><div class="a" style="left:1286px;top:205px;width:179px;height:19px;overflow:hidden"><div class="t" style="left:2.00px;top:4.49px;font-size:13.6px;line-height:13.6px;color:#000;transform:scaleX(1.0014);-webkit-text-stroke:0.25px #000;">Centro Privado - Concertado</div></div><div class="a" style="left:1466px;top:205px;width:179px;height:19px;overflow:hidden"><div class="t" style="left:2.00px;top:4.49px;font-size:13.6px;line-height:13.6px;color:#000;transform:scaleX(0.9602);-webkit-text-stroke:0.25px #000;">Educación Básica</div></div><div class="a" style="left:26px;top:225px;width:1872px;height:19px;background:#FFFFFF;"></div><div class="a" style="left:205px;top:225px;width:1px;height:19px;background:#D4D4D4;"></div><div class="a" style="left:385px;top:225px;width:1px;height:19px;background:#D4D4D4;"></div><div class="a" style="left:565px;top:225px;width:1px;height:19px;background:#D4D4D4;"></div><div class="a" style="left:745px;top:225px;width:1px;height:19px;background:#D4D4D4;"></div><div class="a" style="left:925px;top:225px;width:1px;height:19px;background:#D4D4D4;"></div><div class="a" style="left:1105px;top:225px;width:1px;height:19px;background:#D4D4D4;"></div><div class="a" style="left:1285px;top:225px;width:1px;height:19px;background:#D4D4D4;"></div><div class="a" style="left:1465px;top:225px;width:1px;height:19px;background:#D4D4D4;"></div><div class="a" style="left:1645px;top:225px;width:1px;height:19px;background:#D4D4D4;"></div><div class="a" style="left:26px;top:224px;width:1872px;height:1px;background:#A2B4C6;"></div><div class="a" style="left:0px;top:224px;width:25px;height:1px;background:#C8C8C8;"></div><div class="t" style="left:9.00px;top:229.49px;font-size:13.6px;line-height:13.6px;color:#222;transform:scaleX(0.9256);">3</div><div class="a" style="left:26px;top:225px;width:179px;height:19px;overflow:hidden"><div class="t" style="left:110.00px;top:4.49px;font-size:13.6px;line-height:13.6px;color:#000;transform:scaleX(0.9467);-webkit-text-stroke:0.25px #000;">43,3054307</div></div><div class="a" style="left:206px;top:225px;width:179px;height:19px;overflow:hidden"><div class="t" style="left:112.41px;top:4.49px;font-size:13.6px;line-height:13.6px;color:#000;transform:scaleX(0.9534);-webkit-text-stroke:0.25px #000;">-3,0387536</div></div><div class="a" style="left:386px;top:225px;width:179px;height:19px;overflow:hidden"><div class="t" style="left:2.00px;top:4.49px;font-size:13.6px;line-height:13.6px;color:#000;transform:scaleX(0.9211);-webkit-text-stroke:0.25px #000;">Colegio ITXAROPENA IKASTOLA</div></div><div class="a" style="left:566px;top:225px;width:179px;height:19px;overflow:hidden"><div class="t" style="left:2.00px;top:4.49px;font-size:13.6px;line-height:13.6px;color:#000;transform:scaleX(0.9026);-webkit-text-stroke:0.25px #000;">PAÍS VASCO</div></div><div class="a" style="left:746px;top:225px;width:179px;height:19px;overflow:hidden"><div class="t" style="left:2.00px;top:4.49px;font-size:13.6px;line-height:13.6px;color:#000;transform:scaleX(0.9582);-webkit-text-stroke:0.25px #000;">Vizcaya</div></div><div class="a" style="left:926px;top:225px;width:179px;height:19px;overflow:hidden"><div class="t" style="left:2.00px;top:4.49px;font-size:13.6px;line-height:13.6px;color:#000;transform:scaleX(0.9946);-webkit-text-stroke:0.25px #000;">Valle de Trápaga-Trapagaran</div></div><div class="a" style="left:1106px;top:225px;width:179px;height:19px;overflow:hidden"><div class="t" style="left:2.00px;top:4.49px;font-size:13.6px;line-height:13.6px;color:#000;transform:scaleX(0.9283);-webkit-text-stroke:0.25px #000;">SEBER OTXOA, 2. 48510.  Valle de</div></div><div class="a" style="left:1286px;top:225px;width:179px;height:19px;overflow:hidden"><div class="t" style="left:2.00px;top:4.49px;font-size:13.6px;line-height:13.6px;color:#000;transform:scaleX(1.0014);-webkit-text-stroke:0.25px #000;">Centro Privado - Concertado</div></div><div class="a" style="left:1466px;top:225px;width:179px;height:19px;overflow:hidden"><div class="t" style="left:2.00px;top:4.49px;font-size:13.6px;line-height:13.6px;color:#000;transform:scaleX(0.9602);-webkit-text-stroke:0.25px #000;">Educación Básica</div></div><div class="a" style="left:26px;top:245px;width:1872px;height:19px;background:#DDEBF7;"></div><div class="a" style="left:26px;top:244px;width:1872px;height:1px;background:#A2B4C6;"></div><div class="a" style="left:0px;top:244px;width:25px;height:1px;background:#C8C8C8;"></div><div class="t" style="left:9.00px;top:249.49px;font-size:13.6px;line-height:13.6px;color:#222;transform:scaleX(0.9256);">4</div><div class="a" style="left:26px;top:245px;width:179px;height:19px;overflow:hidden"><div class="t" style="left:110.00px;top:4.49px;font-size:13.6px;line-height:13.6px;color:#000;transform:scaleX(0.9467);-webkit-text-stroke:0.25px #000;">43,1346825</div></div><div class="a" style="left:206px;top:245px;width:179px;height:19px;overflow:hidden"><div class="t" style="left:112.41px;top:4.49px;font-size:13.6px;line-height:13.6px;color:#000;transform:scaleX(0.9534);-webkit-text-stroke:0.25px #000;">-2,0751492</div></div><div class="a" style="left:386px;top:245px;width:179px;height:19px;overflow:hidden"><div class="t" style="left:2.00px;top:4.49px;font-size:13.6px;line-height:13.6px;color:#000;transform:scaleX(1.0063);-webkit-text-stroke:0.25px #000;">Centro Formación Profesional</div></div><div class="a" style="left:566px;top:245px;width:179px;height:19px;overflow:hidden"><div class="t" style="left:2.00px;top:4.49px;font-size:13.6px;line-height:13.6px;color:#000;transform:scaleX(0.9026);-webkit-text-stroke:0.25px #000;">PAÍS VASCO</div></div><div class="a" style="left:746px;top:245px;width:179px;height:19px;overflow:hidden"><div class="t" style="left:2.00px;top:4.49px;font-size:13.6px;line-height:13.6px;color:#000;transform:scaleX(0.9832);-webkit-text-stroke:0.25px #000;">Guipúzcoa</div></div><div class="a" style="left:926px;top:245px;width:179px;height:19px;overflow:hidden"><div class="t" style="left:2.00px;top:4.49px;font-size:13.6px;line-height:13.6px;color:#000;transform:scaleX(1.0083);-webkit-text-stroke:0.25px #000;">Tolosa</div></div><div class="a" style="left:1106px;top:245px;width:179px;height:19px;overflow:hidden"><div class="t" style="left:2.00px;top:4.49px;font-size:13.6px;line-height:13.6px;color:#000;transform:scaleX(0.9342);-webkit-text-stroke:0.25px #000;">KONDEKO ALDAPA, 5-B. 20400</div></div><div class="a" style="left:1286px;top:245px;width:179px;height:19px;overflow:hidden"><div class="t" style="left:2.00px;top:4.49px;font-size:13.6px;line-height:13.6px;color:#000;transform:scaleX(1.0014);-webkit-text-stroke:0.25px #000;">Centro Privado - Concertado</div></div><div class="a" style="left:1466px;top:245px;width:179px;height:19px;overflow:hidden"><div class="t" style="left:2.00px;top:4.49px;font-size:13.6px;line-height:13.6px;color:#000;transform:scaleX(1.0061);-webkit-text-stroke:0.25px #000;">Formación Profesional</div></div><div class="a" style="left:26px;top:265px;width:1872px;height:19px;background:#FFFFFF;"></div><div class="a" style="left:205px;top:265px;width:1px;height:19px;background:#D4D4D4;"></div><div class="a" style="left:385px;top:265px;width:1px;height:19px;background:#D4D4D4;"></div><div class="a" style="left:565px;top:265px;width:1px;height:19px;background:#D4D4D4;"></div><div class="a" style="left:745px;top:265px;width:1px;height:19px;background:#D4D4D4;"></div><div class="a" style="left:925px;top:265px;width:1px;height:19px;background:#D4D4D4;"></div><div class="a" style="left:1105px;top:265px;width:1px;height:19px;background:#D4D4D4;"></div><div class="a" style="left:1285px;top:265px;width:1px;height:19px;background:#D4D4D4;"></div><div class="a" style="left:1465px;top:265px;width:1px;height:19px;background:#D4D4D4;"></div><div class="a" style="left:1645px;top:265px;width:1px;height:19px;background:#D4D4D4;"></div><div class="a" style="left:26px;top:264px;width:1872px;height:1px;background:#A2B4C6;"></div><div class="a" style="left:0px;top:264px;width:25px;height:1px;background:#C8C8C8;"></div><div class="t" style="left:9.00px;top:269.49px;font-size:13.6px;line-height:13.6px;color:#222;transform:scaleX(0.9256);">5</div><div class="a" style="left:26px;top:265px;width:179px;height:19px;overflow:hidden"><div class="t" style="left:117.00px;top:4.49px;font-size:13.6px;line-height:13.6px;color:#000;transform:scaleX(0.9492);-webkit-text-stroke:0.25px #000;">43,301729</div></div><div class="a" style="left:206px;top:265px;width:179px;height:19px;overflow:hidden"><div class="t" style="left:119.41px;top:4.49px;font-size:13.6px;line-height:13.6px;color:#000;transform:scaleX(0.9569);-webkit-text-stroke:0.25px #000;">-1,986304</div></div><div class="a" style="left:386px;top:265px;width:179px;height:19px;overflow:hidden"><div class="t" style="left:2.00px;top:4.49px;font-size:13.6px;line-height:13.6px;color:#000;transform:scaleX(0.9113);-webkit-text-stroke:0.25px #000;">CEIP AIETE IKASTETXEA Donostia</div></div><div class="a" style="left:566px;top:265px;width:179px;height:19px;overflow:hidden"><div class="t" style="left:2.00px;top:4.49px;font-size:13.6px;line-height:13.6px;color:#000;transform:scaleX(0.9026);-webkit-text-stroke:0.25px #000;">PAÍS VASCO</div></div><div class="a" style="left:746px;top:265px;width:179px;height:19px;overflow:hidden"><div class="t" style="left:2.00px;top:4.49px;font-size:13.6px;line-height:13.6px;color:#000;transform:scaleX(0.9832);-webkit-text-stroke:0.25px #000;">Guipúzcoa</div></div><div class="a" style="left:926px;top:265px;width:179px;height:19px;overflow:hidden"><div class="t" style="left:2.00px;top:4.49px;font-size:13.6px;line-height:13.6px;color:#000;transform:scaleX(0.9768);-webkit-text-stroke:0.25px #000;">Donostia-San Sebastián</div></div><div class="a" style="left:1106px;top:265px;width:179px;height:19px;overflow:hidden"><div class="t" style="left:2.00px;top:4.49px;font-size:13.6px;line-height:13.6px;color:#000;transform:scaleX(0.9777);-webkit-text-stroke:0.25px #000;">calle puio. 20009.  Donostia-San</div></div><div class="a" style="left:1286px;top:265px;width:179px;height:19px;overflow:hidden"><div class="t" style="left:2.00px;top:4.49px;font-size:13.6px;line-height:13.6px;color:#000;transform:scaleX(1.0042);-webkit-text-stroke:0.25px #000;">Centro Público</div></div><div class="a" style="left:1466px;top:265px;width:179px;height:19px;overflow:hidden"><div class="t" style="left:2.00px;top:4.49px;font-size:13.6px;line-height:13.6px;color:#000;transform:scaleX(0.9602);-webkit-text-stroke:0.25px #000;">Educación Básica</div></div><div class="a" style="left:1646px;top:265px;width:252px;height:19px;overflow:hidden"><div class="t" style="left:2.00px;top:4.49px;font-size:13.6px;line-height:13.6px;color:#000;transform:scaleX(0.9990);-webkit-text-stroke:0.25px #000;">Gobierno Vasco</div></div><div class="a" style="left:26px;top:285px;width:1872px;height:19px;background:#DDEBF7;"></div><div class="a" style="left:26px;top:284px;width:1872px;height:1px;background:#A2B4C6;"></div><div class="a" style="left:0px;top:284px;width:25px;height:1px;background:#C8C8C8;"></div><div class="t" style="left:9.00px;top:289.49px;font-size:13.6px;line-height:13.6px;color:#222;transform:scaleX(0.9256);">6</div><div class="a" style="left:26px;top:285px;width:179px;height:19px;overflow:hidden"><div class="t" style="left:110.00px;top:4.49px;font-size:13.6px;line-height:13.6px;color:#000;transform:scaleX(0.9467);-webkit-text-stroke:0.25px #000;">43,3257071</div></div><div class="a" style="left:206px;top:285px;width:179px;height:19px;overflow:hidden"><div class="t" style="left:112.41px;top:4.49px;font-size:13.6px;line-height:13.6px;color:#000;transform:scaleX(0.9534);-webkit-text-stroke:0.25px #000;">-1,9427137</div></div><div class="a" style="left:386px;top:285px;width:179px;height:19px;overflow:hidden"><div class="t" style="left:2.00px;top:4.49px;font-size:13.6px;line-height:13.6px;color:#000;transform:scaleX(0.9318);-webkit-text-stroke:0.25px #000;">Colegio SAN LUIS LA SALLE Donostia</div></div><div class="a" style="left:566px;top:285px;width:179px;height:19px;overflow:hidden"><div class="t" style="left:2.00px;top:4.49px;font-size:13.6px;line-height:13.6px;color:#000;transform:scaleX(0.9026);-webkit-text-stroke:0.25px #000;">PAÍS VASCO</div></div><div class="a" style="left:746px;top:285px;width:179px;height:19px;overflow:hidden"><div class="t" style="left:2.00px;top:4.49px;font-size:13.6px;line-height:13.6px;color:#000;transform:scaleX(0.9832);-webkit-text-stroke:0.25px #000;">Guipúzcoa</div></div><div class="a" style="left:926px;top:285px;width:179px;height:19px;overflow:hidden"><div class="t" style="left:2.00px;top:4.49px;font-size:13.6px;line-height:13.6px;color:#000;transform:scaleX(0.9768);-webkit-text-stroke:0.25px #000;">Donostia-San Sebastián</div></div><div class="a" style="left:1106px;top:285px;width:179px;height:19px;overflow:hidden"><div class="t" style="left:2.00px;top:4.49px;font-size:13.6px;line-height:13.6px;color:#000;transform:scaleX(0.9366);-webkit-text-stroke:0.25px #000;">GUARDAPLATA BIDEA, 16. 20009</div></div><div class="a" style="left:1286px;top:285px;width:179px;height:19px;overflow:hidden"><div class="t" style="left:2.00px;top:4.49px;font-size:13.6px;line-height:13.6px;color:#000;transform:scaleX(1.0014);-webkit-text-stroke:0.25px #000;">Centro Privado - Concertado</div></div><div class="a" style="left:1466px;top:285px;width:179px;height:19px;overflow:hidden"><div class="t" style="left:2.00px;top:4.49px;font-size:13.6px;line-height:13.6px;color:#000;transform:scaleX(0.9602);-webkit-text-stroke:0.25px #000;">Educación Básica</div></div><div class="a" style="left:26px;top:305px;width:1872px;height:19px;background:#FFFFFF;"></div><div class="a" style="left:205px;top:305px;width:1px;height:19px;background:#D4D4D4;"></div><div class="a" style="left:385px;top:305px;width:1px;height:19px;background:#D4D4D4;"></div><div class="a" style="left:565px;top:305px;width:1px;height:19px;background:#D4D4D4;"></div><div class="a" style="left:745px;top:305px;width:1px;height:19px;background:#D4D4D4;"></div><div class="a" style="left:925px;top:305px;width:1px;height:19px;background:#D4D4D4;"></div><div class="a" style="left:1105px;top:305px;width:1px;height:19px;background:#D4D4D4;"></div><div class="a" style="left:1285px;top:305px;width:1px;height:19px;background:#D4D4D4;"></div><div class="a" style="left:1465px;top:305px;width:1px;height:19px;background:#D4D4D4;"></div><div class="a" style="left:1645px;top:305px;width:1px;height:19px;background:#D4D4D4;"></div><div class="a" style="left:26px;top:304px;width:1872px;height:1px;background:#A2B4C6;"></div><div class="a" style="left:0px;top:304px;width:25px;height:1px;background:#C8C8C8;"></div><div class="t" style="left:9.00px;top:309.49px;font-size:13.6px;line-height:13.6px;color:#222;transform:scaleX(0.9256);">7</div><div class="a" style="left:26px;top:305px;width:179px;height:19px;overflow:hidden"><div class="t" style="left:110.00px;top:4.49px;font-size:13.6px;line-height:13.6px;color:#000;transform:scaleX(0.9467);-webkit-text-stroke:0.25px #000;">42,6722805</div></div><div class="a" style="left:206px;top:305px;width:179px;height:19px;overflow:hidden"><div class="t" style="left:112.41px;top:4.49px;font-size:13.6px;line-height:13.6px;color:#000;transform:scaleX(0.9534);-webkit-text-stroke:0.25px #000;">-2,3468796</div></div><div class="a" style="left:386px;top:305px;width:179px;height:19px;overflow:hidden"><div class="t" style="left:2.00px;top:4.49px;font-size:13.6px;line-height:13.6px;color:#000;transform:scaleX(0.9539);-webkit-text-stroke:0.25px #000;">Colegio MENDIALDEA Santa Cruz</div></div><div class="a" style="left:566px;top:305px;width:179px;height:19px;overflow:hidden"><div class="t" style="left:2.00px;top:4.49px;font-size:13.6px;line-height:13.6px;color:#000;transform:scaleX(0.9026);-webkit-text-stroke:0.25px #000;">PAÍS VASCO</div></div><div class="a" style="left:746px;top:305px;width:179px;height:19px;overflow:hidden"><div class="t" style="left:2.00px;top:4.49px;font-size:13.6px;line-height:13.6px;color:#000;transform:scaleX(0.9780);-webkit-text-stroke:0.25px #000;">Álava</div></div><div class="a" style="left:926px;top:305px;width:179px;height:19px;overflow:hidden"><div class="t" style="left:2.00px;top:4.49px;font-size:13.6px;line-height:13.6px;color:#000;transform:scaleX(0.9872);-webkit-text-stroke:0.25px #000;">Campezo/Kanpezu</div></div><div class="a" style="left:1106px;top:305px;width:179px;height:19px;overflow:hidden"><div class="t" style="left:2.00px;top:4.49px;font-size:13.6px;line-height:13.6px;color:#000;transform:scaleX(0.9791);-webkit-text-stroke:0.25px #000;">Arrabal Kalea, 99. 01110.  San Vicente</div></div><div class="a" style="left:1286px;top:305px;width:179px;height:19px;overflow:hidden"><div class="t" style="left:2.00px;top:4.49px;font-size:13.6px;line-height:13.6px;color:#000;transform:scaleX(1.0042);-webkit-text-stroke:0.25px #000;">Centro Público</div></div><div class="a" style="left:1466px;top:305px;width:179px;height:19px;overflow:hidden"><div class="t" style="left:2.00px;top:4.49px;font-size:13.6px;line-height:13.6px;color:#000;transform:scaleX(0.9602);-webkit-text-stroke:0.25px #000;">Educación Básica</div></div><div class="a" style="left:1646px;top:305px;width:252px;height:19px;overflow:hidden"><div class="t" style="left:2.00px;top:4.49px;font-size:13.6px;line-height:13.6px;color:#000;transform:scaleX(0.9990);-webkit-text-stroke:0.25px #000;">Gobierno Vasco</div></div><div class="a" style="left:26px;top:325px;width:1872px;height:19px;background:#DDEBF7;"></div><div class="a" style="left:26px;top:324px;width:1872px;height:1px;background:#A2B4C6;"></div><div class="a" style="left:0px;top:324px;width:25px;height:1px;background:#C8C8C8;"></div><div class="t" style="left:9.00px;top:329.49px;font-size:13.6px;line-height:13.6px;color:#222;transform:scaleX(0.9256);">8</div><div class="a" style="left:26px;top:325px;width:179px;height:19px;overflow:hidden"><div class="t" style="left:110.00px;top:4.49px;font-size:13.6px;line-height:13.6px;color:#000;transform:scaleX(0.9467);-webkit-text-stroke:0.25px #000;">43,2960565</div></div><div class="a" style="left:206px;top:325px;width:179px;height:19px;overflow:hidden"><div class="t" style="left:112.41px;top:4.49px;font-size:13.6px;line-height:13.6px;color:#000;transform:scaleX(0.9534);-webkit-text-stroke:0.25px #000;">-1,9622546</div></div><div class="a" style="left:386px;top:325px;width:179px;height:19px;overflow:hidden"><div class="t" style="left:2.00px;top:4.49px;font-size:13.6px;line-height:13.6px;color:#000;transform:scaleX(0.9754);-webkit-text-stroke:0.25px #000;">Colegio MARY WARD Donostia</div></div><div class="a" style="left:566px;top:325px;width:179px;height:19px;overflow:hidden"><div class="t" style="left:2.00px;top:4.49px;font-size:13.6px;line-height:13.6px;color:#000;transform:scaleX(0.9026);-webkit-text-stroke:0.25px #000;">PAÍS VASCO</div></div><div class="a" style="left:746px;top:325px;width:179px;height:19px;overflow:hidden"><div class="t" style="left:2.00px;top:4.49px;font-size:13.6px;line-height:13.6px;color:#000;transform:scaleX(0.9832);-webkit-text-stroke:0.25px #000;">Guipúzcoa</div></div><div class="a" style="left:926px;top:325px;width:179px;height:19px;overflow:hidden"><div class="t" style="left:2.00px;top:4.49px;font-size:13.6px;line-height:13.6px;color:#000;transform:scaleX(0.9768);-webkit-text-stroke:0.25px #000;">Donostia-San Sebastián</div></div><div class="a" style="left:1106px;top:325px;width:179px;height:19px;overflow:hidden"><div class="t" style="left:2.00px;top:4.49px;font-size:13.6px;line-height:13.6px;color:#000;transform:scaleX(0.9246);-webkit-text-stroke:0.25px #000;">LARRAÑATEGUI BIDEA, 27. 20009</div></div><div class="a" style="left:1286px;top:325px;width:179px;height:19px;overflow:hidden"><div class="t" style="left:2.00px;top:4.49px;font-size:13.6px;line-height:13.6px;color:#000;transform:scaleX(1.0014);-webkit-text-stroke:0.25px #000;">Centro Privado - Concertado</div></div><div class="a" style="left:1466px;top:325px;width:179px;height:19px;overflow:hidden"><div class="t" style="left:2.00px;top:4.49px;font-size:13.6px;line-height:13.6px;color:#000;transform:scaleX(0.9602);-webkit-text-stroke:0.25px #000;">Educación Básica</div></div><div class="a" style="left:26px;top:345px;width:1872px;height:19px;background:#FFFFFF;"></div><div class="a" style="left:205px;top:345px;width:1px;height:19px;background:#D4D4D4;"></div><div class="a" style="left:385px;top:345px;width:1px;height:19px;background:#D4D4D4;"></div><div class="a" style="left:565px;top:345px;width:1px;height:19px;background:#D4D4D4;"></div><div class="a" style="left:745px;top:345px;width:1px;height:19px;background:#D4D4D4;"></div><div class="a" style="left:925px;top:345px;width:1px;height:19px;background:#D4D4D4;"></div><div class="a" style="left:1105px;top:345px;width:1px;height:19px;background:#D4D4D4;"></div><div class="a" style="left:1285px;top:345px;width:1px;height:19px;background:#D4D4D4;"></div><div class="a" style="left:1465px;top:345px;width:1px;height:19px;background:#D4D4D4;"></div><div class="a" style="left:1645px;top:345px;width:1px;height:19px;background:#D4D4D4;"></div><div class="a" style="left:26px;top:344px;width:1872px;height:1px;background:#A2B4C6;"></div><div class="a" style="left:0px;top:344px;width:25px;height:1px;background:#C8C8C8;"></div><div class="t" style="left:9.00px;top:349.49px;font-size:13.6px;line-height:13.6px;color:#222;transform:scaleX(0.9256);">9</div><div class="a" style="left:26px;top:345px;width:179px;height:19px;overflow:hidden"><div class="t" style="left:110.00px;top:4.49px;font-size:13.6px;line-height:13.6px;color:#000;transform:scaleX(0.9467);-webkit-text-stroke:0.25px #000;">43,2009935</div></div><div class="a" style="left:206px;top:345px;width:179px;height:19px;overflow:hidden"><div class="t" style="left:112.41px;top:4.49px;font-size:13.6px;line-height:13.6px;color:#000;transform:scaleX(0.9534);-webkit-text-stroke:0.25px #000;">-3,0485033</div></div><div class="a" style="left:386px;top:345px;width:179px;height:19px;overflow:hidden"><div class="t" style="left:2.00px;top:4.49px;font-size:13.6px;line-height:13.6px;color:#000;transform:scaleX(0.9544);-webkit-text-stroke:0.25px #000;">Colegio AVELLANEDA Sodupe</div></div><div class="a" style="left:566px;top:345px;width:179px;height:19px;overflow:hidden"><div class="t" style="left:2.00px;top:4.49px;font-size:13.6px;line-height:13.6px;color:#000;transform:scaleX(0.9026);-webkit-text-stroke:0.25px #000;">PAÍS VASCO</div></div><div class="a" style="left:746px;top:345px;width:179px;height:19px;overflow:hidden"><div class="t" style="left:2.00px;top:4.49px;font-size:13.6px;line-height:13.6px;color:#000;transform:scaleX(0.9582);-webkit-text-stroke:0.25px #000;">Vizcaya</div></div><div class="a" style="left:926px;top:345px;width:179px;height:19px;overflow:hidden"><div class="t" style="left:2.00px;top:4.49px;font-size:13.6px;line-height:13.6px;color:#000;transform:scaleX(0.9663);-webkit-text-stroke:0.25px #000;">Güeñes</div></div><div class="a" style="left:1106px;top:345px;width:179px;height:19px;overflow:hidden"><div class="t" style="left:2.00px;top:4.49px;font-size:13.6px;line-height:13.6px;color:#000;transform:scaleX(0.9328);-webkit-text-stroke:0.25px #000;">GALLARRAGA,24. 48830.  Sodupe</div></div><div class="a" style="left:1286px;top:345px;width:179px;height:19px;overflow:hidden"><div class="t" style="left:2.00px;top:4.49px;font-size:13.6px;line-height:13.6px;color:#000;transform:scaleX(1.0014);-webkit-text-stroke:0.25px #000;">Centro Privado - Concertado</div></div><div class="a" style="left:1466px;top:345px;width:179px;height:19px;overflow:hidden"><div class="t" style="left:2.00px;top:4.49px;font-size:13.6px;line-height:13.6px;color:#000;transform:scaleX(0.9602);-webkit-text-stroke:0.25px #000;">Educación Básica</div></div><div class="a" style="left:26px;top:365px;width:1872px;height:19px;background:#DDEBF7;"></div><div class="a" style="left:26px;top:364px;width:1872px;height:1px;background:#A2B4C6;"></div><div class="a" style="left:0px;top:364px;width:25px;height:1px;background:#C8C8C8;"></div><div class="t" style="left:5.50px;top:369.49px;font-size:13.6px;line-height:13.6px;color:#222;transform:scaleX(0.9256);">10</div><div class="a" style="left:26px;top:365px;width:179px;height:19px;overflow:hidden"><div class="t" style="left:110.00px;top:4.49px;font-size:13.6px;line-height:13.6px;color:#000;transform:scaleX(0.9467);-webkit-text-stroke:0.25px #000;">43,3222648</div></div><div class="a" style="left:206px;top:365px;width:179px;height:19px;overflow:hidden"><div class="t" style="left:112.41px;top:4.49px;font-size:13.6px;line-height:13.6px;color:#000;transform:scaleX(0.9534);-webkit-text-stroke:0.25px #000;">-2,9135185</div></div><div class="a" style="left:386px;top:365px;width:179px;height:19px;overflow:hidden"><div class="t" style="left:2.00px;top:4.49px;font-size:13.6px;line-height:13.6px;color:#000;transform:scaleX(0.9473);-webkit-text-stroke:0.25px #000;">Colegio LAURO IKASTOLA Lauroeta</div></div><div class="a" style="left:566px;top:365px;width:179px;height:19px;overflow:hidden"><div class="t" style="left:2.00px;top:4.49px;font-size:13.6px;line-height:13.6px;color:#000;transform:scaleX(0.9026);-webkit-text-stroke:0.25px #000;">PAÍS VASCO</div></div><div class="a" style="left:746px;top:365px;width:179px;height:19px;overflow:hidden"><div class="t" style="left:2.00px;top:4.49px;font-size:13.6px;line-height:13.6px;color:#000;transform:scaleX(0.9582);-webkit-text-stroke:0.25px #000;">Vizcaya</div></div><div class="a" style="left:926px;top:365px;width:179px;height:19px;overflow:hidden"><div class="t" style="left:2.00px;top:4.49px;font-size:13.6px;line-height:13.6px;color:#000;transform:scaleX(0.9936);-webkit-text-stroke:0.25px #000;">Loiu</div></div><div class="a" style="left:1106px;top:365px;width:179px;height:19px;overflow:hidden"><div class="t" style="left:2.00px;top:4.49px;font-size:13.6px;line-height:13.6px;color:#000;transform:scaleX(0.9405);-webkit-text-stroke:0.25px #000;">BO.LAUROS. 48150.  Lauroeta</div></div><div class="a" style="left:1286px;top:365px;width:179px;height:19px;overflow:hidden"><div class="t" style="left:2.00px;top:4.49px;font-size:13.6px;line-height:13.6px;color:#000;transform:scaleX(1.0014);-webkit-text-stroke:0.25px #000;">Centro Privado - Concertado</div></div><div class="a" style="left:1466px;top:365px;width:179px;height:19px;overflow:hidden"><div class="t" style="left:2.00px;top:4.49px;font-size:13.6px;line-height:13.6px;color:#000;transform:scaleX(0.9602);-webkit-text-stroke:0.25px #000;">Educación Básica</div></div><div class="a" style="left:26px;top:385px;width:1872px;height:19px;background:#FFFFFF;"></div><div class="a" style="left:205px;top:385px;width:1px;height:19px;background:#D4D4D4;"></div><div class="a" style="left:385px;top:385px;width:1px;height:19px;background:#D4D4D4;"></div><div class="a" style="left:565px;top:385px;width:1px;height:19px;background:#D4D4D4;"></div><div class="a" style="left:745px;top:385px;width:1px;height:19px;background:#D4D4D4;"></div><div class="a" style="left:925px;top:385px;width:1px;height:19px;background:#D4D4D4;"></div><div class="a" style="left:1105px;top:385px;width:1px;height:19px;background:#D4D4D4;"></div><div class="a" style="left:1285px;top:385px;width:1px;height:19px;background:#D4D4D4;"></div><div class="a" style="left:1465px;top:385px;width:1px;height:19px;background:#D4D4D4;"></div><div class="a" style="left:1645px;top:385px;width:1px;height:19px;background:#D4D4D4;"></div><div class="a" style="left:26px;top:384px;width:1872px;height:1px;background:#A2B4C6;"></div><div class="a" style="left:0px;top:384px;width:25px;height:1px;background:#C8C8C8;"></div><div class="t" style="left:5.50px;top:389.49px;font-size:13.6px;line-height:13.6px;color:#222;transform:scaleX(0.9912);">11</div><div class="a" style="left:26px;top:385px;width:179px;height:19px;overflow:hidden"><div class="t" style="left:110.00px;top:4.49px;font-size:13.6px;line-height:13.6px;color:#000;transform:scaleX(0.9467);-webkit-text-stroke:0.25px #000;">43,3059574</div></div><div class="a" style="left:206px;top:385px;width:179px;height:19px;overflow:hidden"><div class="t" style="left:112.41px;top:4.49px;font-size:13.6px;line-height:13.6px;color:#000;transform:scaleX(0.9534);-webkit-text-stroke:0.25px #000;">-2,0053148</div></div><div class="a" style="left:386px;top:385px;width:179px;height:19px;overflow:hidden"><div class="t" style="left:2.00px;top:4.49px;font-size:13.6px;line-height:13.6px;color:#000;transform:scaleX(0.9306);-webkit-text-stroke:0.25px #000;">Colegio ANTONIANO IKASTETXEA</div></div><div class="a" style="left:566px;top:385px;width:179px;height:19px;overflow:hidden"><div class="t" style="left:2.00px;top:4.49px;font-size:13.6px;line-height:13.6px;color:#000;transform:scaleX(0.9026);-webkit-text-stroke:0.25px #000;">PAÍS VASCO</div></div><div class="a" style="left:746px;top:385px;width:179px;height:19px;overflow:hidden"><div class="t" style="left:2.00px;top:4.49px;font-size:13.6px;line-height:13.6px;color:#000;transform:scaleX(0.9832);-webkit-text-stroke:0.25px #000;">Guipúzcoa</div></div><div class="a" style="left:926px;top:385px;width:179px;height:19px;overflow:hidden"><div class="t" style="left:2.00px;top:4.49px;font-size:13.6px;line-height:13.6px;color:#000;transform:scaleX(0.9861);-webkit-text-stroke:0.25px #000;">Zarautz</div></div><div class="a" style="left:1106px;top:385px;width:179px;height:19px;overflow:hidden"><div class="t" style="left:2.00px;top:4.49px;font-size:13.6px;line-height:13.6px;color:#000;transform:scaleX(0.9372);-webkit-text-stroke:0.25px #000;">GUIPUZKOA KALEA, 5. 20800.  Zarautz</div></div><div class="a" style="left:1286px;top:385px;width:179px;height:19px;overflow:hidden"><div class="t" style="left:2.00px;top:4.49px;font-size:13.6px;line-height:13.6px;color:#000;transform:scaleX(1.0014);-webkit-text-stroke:0.25px #000;">Centro Privado - Concertado</div></div><div class="a" style="left:1466px;top:385px;width:179px;height:19px;overflow:hidden"><div class="t" style="left:2.00px;top:4.49px;font-size:13.6px;line-height:13.6px;color:#000;transform:scaleX(0.9602);-webkit-text-stroke:0.25px #000;">Educación Básica</div></div><div class="a" style="left:26px;top:405px;width:1872px;height:19px;background:#DDEBF7;"></div><div class="a" style="left:26px;top:404px;width:1872px;height:1px;background:#A2B4C6;"></div><div class="a" style="left:0px;top:404px;width:25px;height:1px;background:#C8C8C8;"></div><div class="t" style="left:5.50px;top:409.49px;font-size:13.6px;line-height:13.6px;color:#222;transform:scaleX(0.9256);">12</div><div class="a" style="left:26px;top:405px;width:179px;height:19px;overflow:hidden"><div class="t" style="left:110.00px;top:4.49px;font-size:13.6px;line-height:13.6px;color:#000;transform:scaleX(0.9467);-webkit-text-stroke:0.25px #000;">43,2655159</div></div><div class="a" style="left:206px;top:405px;width:179px;height:19px;overflow:hidden"><div class="t" style="left:112.41px;top:4.49px;font-size:13.6px;line-height:13.6px;color:#000;transform:scaleX(0.9534);-webkit-text-stroke:0.25px #000;">-1,9748245</div></div><div class="a" style="left:386px;top:405px;width:179px;height:19px;overflow:hidden"><div class="t" style="left:2.00px;top:4.49px;font-size:13.6px;line-height:13.6px;color:#000;transform:scaleX(0.9508);-webkit-text-stroke:0.25px #000;">Escuela de Música HERNANIKO</div></div><div class="a" style="left:566px;top:405px;width:179px;height:19px;overflow:hidden"><div class="t" style="left:2.00px;top:4.49px;font-size:13.6px;line-height:13.6px;color:#000;transform:scaleX(0.9026);-webkit-text-stroke:0.25px #000;">PAÍS VASCO</div></div><div class="a" style="left:746px;top:405px;width:179px;height:19px;overflow:hidden"><div class="t" style="left:2.00px;top:4.49px;font-size:13.6px;line-height:13.6px;color:#000;transform:scaleX(0.9832);-webkit-text-stroke:0.25px #000;">Guipúzcoa</div></div><div class="a" style="left:926px;top:405px;width:179px;height:19px;overflow:hidden"><div class="t" style="left:2.00px;top:4.49px;font-size:13.6px;line-height:13.6px;color:#000;transform:scaleX(1.0172);-webkit-text-stroke:0.25px #000;">Hernani</div></div><div class="a" style="left:1106px;top:405px;width:179px;height:19px;overflow:hidden"><div class="t" style="left:2.00px;top:4.49px;font-size:13.6px;line-height:13.6px;color:#000;transform:scaleX(0.9273);-webkit-text-stroke:0.25px #000;">H.GUDARIAREN EMPARANTZA</div></div><div class="a" style="left:1286px;top:405px;width:179px;height:19px;overflow:hidden"><div class="t" style="left:2.00px;top:4.49px;font-size:13.6px;line-height:13.6px;color:#000;transform:scaleX(1.0042);-webkit-text-stroke:0.25px #000;">Centro Público</div></div><div class="a" style="left:1466px;top:405px;width:179px;height:19px;overflow:hidden"><div class="t" style="left:2.00px;top:4.49px;font-size:13.6px;line-height:13.6px;color:#000;transform:scaleX(0.9716);-webkit-text-stroke:0.25px #000;">Enseñanzas Artísticas</div></div><div class="a" style="left:1646px;top:405px;width:252px;height:19px;overflow:hidden"><div class="t" style="left:2.00px;top:4.49px;font-size:13.6px;line-height:13.6px;color:#000;transform:scaleX(0.9990);-webkit-text-stroke:0.25px #000;">Gobierno Vasco</div></div><div class="a" style="left:26px;top:425px;width:1872px;height:19px;background:#FFFFFF;"></div><div class="a" style="left:205px;top:425px;width:1px;height:19px;background:#D4D4D4;"></div><div class="a" style="left:385px;top:425px;width:1px;height:19px;background:#D4D4D4;"></div><div class="a" style="left:565px;top:425px;width:1px;height:19px;background:#D4D4D4;"></div><div class="a" style="left:745px;top:425px;width:1px;height:19px;background:#D4D4D4;"></div><div class="a" style="left:925px;top:425px;width:1px;height:19px;background:#D4D4D4;"></div><div class="a" style="left:1105px;top:425px;width:1px;height:19px;background:#D4D4D4;"></div><div class="a" style="left:1285px;top:425px;width:1px;height:19px;background:#D4D4D4;"></div><div class="a" style="left:1465px;top:425px;width:1px;height:19px;background:#D4D4D4;"></div><div class="a" style="left:1645px;top:425px;width:1px;height:19px;background:#D4D4D4;"></div><div class="a" style="left:26px;top:424px;width:1872px;height:1px;background:#A2B4C6;"></div><div class="a" style="left:0px;top:424px;width:25px;height:1px;background:#C8C8C8;"></div><div class="t" style="left:5.50px;top:429.49px;font-size:13.6px;line-height:13.6px;color:#222;transform:scaleX(0.9256);">13</div><div class="a" style="left:26px;top:425px;width:179px;height:19px;overflow:hidden"><div class="t" style="left:110.00px;top:4.49px;font-size:13.6px;line-height:13.6px;color:#000;transform:scaleX(0.9467);-webkit-text-stroke:0.25px #000;">43,3154858</div></div><div class="a" style="left:206px;top:425px;width:179px;height:19px;overflow:hidden"><div class="t" style="left:112.41px;top:4.49px;font-size:13.6px;line-height:13.6px;color:#000;transform:scaleX(0.9534);-webkit-text-stroke:0.25px #000;">-1,9026072</div></div><div class="a" style="left:386px;top:425px;width:179px;height:19px;overflow:hidden"><div class="t" style="left:2.00px;top:4.49px;font-size:13.6px;line-height:13.6px;color:#000;transform:scaleX(0.9442);-webkit-text-stroke:0.25px #000;">Escuela de Música ZURRIOLA</div></div><div class="a" style="left:566px;top:425px;width:179px;height:19px;overflow:hidden"><div class="t" style="left:2.00px;top:4.49px;font-size:13.6px;line-height:13.6px;color:#000;transform:scaleX(0.9026);-webkit-text-stroke:0.25px #000;">PAÍS VASCO</div></div><div class="a" style="left:746px;top:425px;width:179px;height:19px;overflow:hidden"><div class="t" style="left:2.00px;top:4.49px;font-size:13.6px;line-height:13.6px;color:#000;transform:scaleX(0.9832);-webkit-text-stroke:0.25px #000;">Guipúzcoa</div></div><div class="a" style="left:926px;top:425px;width:179px;height:19px;overflow:hidden"><div class="t" style="left:2.00px;top:4.49px;font-size:13.6px;line-height:13.6px;color:#000;transform:scaleX(0.9768);-webkit-text-stroke:0.25px #000;">Donostia-San Sebastián</div></div><div class="a" style="left:1106px;top:425px;width:179px;height:19px;overflow:hidden"><div class="t" style="left:2.00px;top:4.49px;font-size:13.6px;line-height:13.6px;color:#000;transform:scaleX(0.8969);-webkit-text-stroke:0.25px #000;">JOSE ORBEGOZO,S/N.BO.GROS</div></div><div class="a" style="left:1286px;top:425px;width:179px;height:19px;overflow:hidden"><div class="t" style="left:2.00px;top:4.49px;font-size:13.6px;line-height:13.6px;color:#000;transform:scaleX(1.0014);-webkit-text-stroke:0.25px #000;">Centro Privado - Concertado</div></div><div class="a" style="left:1466px;top:425px;width:179px;height:19px;overflow:hidden"><div class="t" style="left:2.00px;top:4.49px;font-size:13.6px;line-height:13.6px;color:#000;transform:scaleX(0.9716);-webkit-text-stroke:0.25px #000;">Enseñanzas Artísticas</div></div><div class="a" style="left:26px;top:445px;width:1872px;height:19px;background:#DDEBF7;"></div><div class="a" style="left:26px;top:444px;width:1872px;height:1px;background:#A2B4C6;"></div><div class="a" style="left:0px;top:444px;width:25px;height:1px;background:#C8C8C8;"></div><div class="t" style="left:5.50px;top:449.49px;font-size:13.6px;line-height:13.6px;color:#222;transform:scaleX(0.9256);">14</div><div class="a" style="left:26px;top:445px;width:179px;height:19px;overflow:hidden"><div class="t" style="left:110.00px;top:4.49px;font-size:13.6px;line-height:13.6px;color:#000;transform:scaleX(0.9467);-webkit-text-stroke:0.25px #000;">43,3247962</div></div><div class="a" style="left:206px;top:445px;width:179px;height:19px;overflow:hidden"><div class="t" style="left:112.41px;top:4.49px;font-size:13.6px;line-height:13.6px;color:#000;transform:scaleX(0.9534);-webkit-text-stroke:0.25px #000;">-1,9660365</div></div><div class="a" style="left:386px;top:445px;width:179px;height:19px;overflow:hidden"><div class="t" style="left:2.00px;top:4.49px;font-size:13.6px;line-height:13.6px;color:#000;transform:scaleX(0.9209);-webkit-text-stroke:0.25px #000;">Colegio ZURRIOLA IKASTOLA</div></div><div class="a" style="left:566px;top:445px;width:179px;height:19px;overflow:hidden"><div class="t" style="left:2.00px;top:4.49px;font-size:13.6px;line-height:13.6px;color:#000;transform:scaleX(0.9026);-webkit-text-stroke:0.25px #000;">PAÍS VASCO</div></div><div class="a" style="left:746px;top:445px;width:179px;height:19px;overflow:hidden"><div class="t" style="left:2.00px;top:4.49px;font-size:13.6px;line-height:13.6px;color:#000;transform:scaleX(0.9832);-webkit-text-stroke:0.25px #000;">Guipúzcoa</div></div><div class="a" style="left:926px;top:445px;width:179px;height:19px;overflow:hidden"><div class="t" style="left:2.00px;top:4.49px;font-size:13.6px;line-height:13.6px;color:#000;transform:scaleX(0.9768);-webkit-text-stroke:0.25px #000;">Donostia-San Sebastián</div></div><div class="a" style="left:1106px;top:445px;width:179px;height:19px;overflow:hidden"><div class="t" style="left:2.00px;top:4.49px;font-size:13.6px;line-height:13.6px;color:#000;transform:scaleX(0.9602);-webkit-text-stroke:0.25px #000;">INDIANOENE, 1. 20001.  Donostia</div></div><div class="a" style="left:1286px;top:445px;width:179px;height:19px;overflow:hidden"><div class="t" style="left:2.00px;top:4.49px;font-size:13.6px;line-height:13.6px;color:#000;transform:scaleX(1.0014);-webkit-text-stroke:0.25px #000;">Centro Privado - Concertado</div></div><div class="a" style="left:1466px;top:445px;width:179px;height:19px;overflow:hidden"><div class="t" style="left:2.00px;top:4.49px;font-size:13.6px;line-height:13.6px;color:#000;transform:scaleX(0.9602);-webkit-text-stroke:0.25px #000;">Educación Básica</div></div><div class="a" style="left:26px;top:465px;width:1872px;height:19px;background:#FFFFFF;"></div><div class="a" style="left:205px;top:465px;width:1px;height:19px;background:#D4D4D4;"></div><div class="a" style="left:385px;top:465px;width:1px;height:19px;background:#D4D4D4;"></div><div class="a" style="left:565px;top:465px;width:1px;height:19px;background:#D4D4D4;"></div><div class="a" style="left:745px;top:465px;width:1px;height:19px;background:#D4D4D4;"></div><div class="a" style="left:925px;top:465px;width:1px;height:19px;background:#D4D4D4;"></div><div class="a" style="left:1105px;top:465px;width:1px;height:19px;background:#D4D4D4;"></div><div class="a" style="left:1285px;top:465px;width:1px;height:19px;background:#D4D4D4;"></div><div class="a" style="left:1465px;top:465px;width:1px;height:19px;background:#D4D4D4;"></div><div class="a" style="left:1645px;top:465px;width:1px;height:19px;background:#D4D4D4;"></div><div class="a" style="left:26px;top:464px;width:1872px;height:1px;background:#A2B4C6;"></div><div class="a" style="left:0px;top:464px;width:25px;height:1px;background:#C8C8C8;"></div><div class="t" style="left:5.50px;top:469.49px;font-size:13.6px;line-height:13.6px;color:#222;transform:scaleX(0.9256);">15</div><div class="a" style="left:26px;top:465px;width:179px;height:19px;overflow:hidden"><div class="t" style="left:124.00px;top:4.49px;font-size:13.6px;line-height:13.6px;color:#000;transform:scaleX(0.9694);-webkit-text-stroke:0.25px #000;">40,67115</div></div><div class="a" style="left:206px;top:465px;width:179px;height:19px;overflow:hidden"><div class="t" style="left:119.41px;top:4.49px;font-size:13.6px;line-height:13.6px;color:#000;transform:scaleX(0.9569);-webkit-text-stroke:0.25px #000;">-3,772548</div></div><div class="a" style="left:386px;top:465px;width:179px;height:19px;overflow:hidden"><div class="t" style="left:2.00px;top:4.49px;font-size:13.6px;line-height:13.6px;color:#000;transform:scaleX(0.9567);-webkit-text-stroke:0.25px #000;">Colegio ZURBARAN Colmenar</div></div><div class="a" style="left:566px;top:465px;width:179px;height:19px;overflow:hidden"><div class="t" style="left:2.00px;top:4.49px;font-size:13.6px;line-height:13.6px;color:#000;transform:scaleX(0.9675);-webkit-text-stroke:0.25px #000;">MADRID</div></div><div class="a" style="left:746px;top:465px;width:179px;height:19px;overflow:hidden"><div class="t" style="left:2.00px;top:4.49px;font-size:13.6px;line-height:13.6px;color:#000;transform:scaleX(1.0693);-webkit-text-stroke:0.25px #000;">Madrid</div></div><div class="a" style="left:926px;top:465px;width:179px;height:19px;overflow:hidden"><div class="t" style="left:2.00px;top:4.49px;font-size:13.6px;line-height:13.6px;color:#000;transform:scaleX(1.0077);-webkit-text-stroke:0.25px #000;">Colmenar Viejo</div></div><div class="a" style="left:1106px;top:465px;width:179px;height:19px;overflow:hidden"><div class="t" style="left:2.00px;top:4.49px;font-size:13.6px;line-height:13.6px;color:#000;transform:scaleX(0.9783);-webkit-text-stroke:0.25px #000;">C/ de Zurbarán 7. 28770.  Colmenar</div></div><div class="a" style="left:1286px;top:465px;width:179px;height:19px;overflow:hidden"><div class="t" style="left:2.00px;top:4.49px;font-size:13.6px;line-height:13.6px;color:#000;transform:scaleX(1.0014);-webkit-text-stroke:0.25px #000;">Centro Privado - Concertado</div></div><div class="a" style="left:1466px;top:465px;width:179px;height:19px;overflow:hidden"><div class="t" style="left:2.00px;top:4.49px;font-size:13.6px;line-height:13.6px;color:#000;transform:scaleX(0.9602);-webkit-text-stroke:0.25px #000;">Educación Básica</div></div><div class="a" style="left:1646px;top:465px;width:252px;height:19px;overflow:hidden"><div class="t" style="left:2.00px;top:4.49px;font-size:13.6px;line-height:13.6px;color:#000;transform:scaleX(0.8867);-webkit-text-stroke:0.25px #000;">CULTIVO DE CIENCIAS Y LETRAS, S.A.(CILESA)</div></div><div class="a" style="left:26px;top:485px;width:1872px;height:19px;background:#DDEBF7;"></div><div class="a" style="left:26px;top:484px;width:1872px;height:1px;background:#A2B4C6;"></div><div class="a" style="left:0px;top:484px;width:25px;height:1px;background:#C8C8C8;"></div><div class="t" style="left:5.50px;top:489.49px;font-size:13.6px;line-height:13.6px;color:#222;transform:scaleX(0.9256);">16</div><div class="a" style="left:26px;top:485px;width:179px;height:19px;overflow:hidden"><div class="t" style="left:110.00px;top:4.49px;font-size:13.6px;line-height:13.6px;color:#000;transform:scaleX(0.9467);-webkit-text-stroke:0.25px #000;">43,2710079</div></div><div class="a" style="left:206px;top:485px;width:179px;height:19px;overflow:hidden"><div class="t" style="left:112.41px;top:4.49px;font-size:13.6px;line-height:13.6px;color:#000;transform:scaleX(0.9534);-webkit-text-stroke:0.25px #000;">-2,0505907</div></div><div class="a" style="left:386px;top:485px;width:179px;height:19px;overflow:hidden"><div class="t" style="left:2.00px;top:4.49px;font-size:13.6px;line-height:13.6px;color:#000;transform:scaleX(0.9573);-webkit-text-stroke:0.25px #000;">Escuela de Música ZUMARTE</div></div><div class="a" style="left:566px;top:485px;width:179px;height:19px;overflow:hidden"><div class="t" style="left:2.00px;top:4.49px;font-size:13.6px;line-height:13.6px;color:#000;transform:scaleX(0.9026);-webkit-text-stroke:0.25px #000;">PAÍS VASCO</div></div><div class="a" style="left:746px;top:485px;width:179px;height:19px;overflow:hidden"><div class="t" style="left:2.00px;top:4.49px;font-size:13.6px;line-height:13.6px;color:#000;transform:scaleX(0.9832);-webkit-text-stroke:0.25px #000;">Guipúzcoa</div></div><div class="a" style="left:926px;top:485px;width:179px;height:19px;overflow:hidden"><div class="t" style="left:2.00px;top:4.49px;font-size:13.6px;line-height:13.6px;color:#000;transform:scaleX(1.0249);-webkit-text-stroke:0.25px #000;">Usurbil</div></div><div class="a" style="left:1106px;top:485px;width:179px;height:19px;overflow:hidden"><div class="t" style="left:2.00px;top:4.49px;font-size:13.6px;line-height:13.6px;color:#000;transform:scaleX(0.9129);-webkit-text-stroke:0.25px #000;">KALE NAGUSIA Z/G (KULTUR ETXEA)</div></div><div class="a" style="left:1286px;top:485px;width:179px;height:19px;overflow:hidden"><div class="t" style="left:2.00px;top:4.49px;font-size:13.6px;line-height:13.6px;color:#000;transform:scaleX(1.0014);-webkit-text-stroke:0.25px #000;">Centro Privado - Concertado</div></div><div class="a" style="left:1466px;top:485px;width:179px;height:19px;overflow:hidden"><div class="t" style="left:2.00px;top:4.49px;font-size:13.6px;line-height:13.6px;color:#000;transform:scaleX(0.9716);-webkit-text-stroke:0.25px #000;">Enseñanzas Artísticas</div></div><div class="a" style="left:26px;top:505px;width:1872px;height:19px;background:#FFFFFF;"></div><div class="a" style="left:205px;top:505px;width:1px;height:19px;background:#D4D4D4;"></div><div class="a" style="left:385px;top:505px;width:1px;height:19px;background:#D4D4D4;"></div><div class="a" style="left:565px;top:505px;width:1px;height:19px;background:#D4D4D4;"></div><div class="a" style="left:745px;top:505px;width:1px;height:19px;background:#D4D4D4;"></div><div class="a" style="left:925px;top:505px;width:1px;height:19px;background:#D4D4D4;"></div><div class="a" style="left:1105px;top:505px;width:1px;height:19px;background:#D4D4D4;"></div><div class="a" style="left:1285px;top:505px;width:1px;height:19px;background:#D4D4D4;"></div><div class="a" style="left:1465px;top:505px;width:1px;height:19px;background:#D4D4D4;"></div><div class="a" style="left:1645px;top:505px;width:1px;height:19px;background:#D4D4D4;"></div><div class="a" style="left:26px;top:504px;width:1872px;height:1px;background:#A2B4C6;"></div><div class="a" style="left:0px;top:504px;width:25px;height:1px;background:#C8C8C8;"></div><div class="t" style="left:5.50px;top:509.49px;font-size:13.6px;line-height:13.6px;color:#222;transform:scaleX(0.9256);">17</div><div class="a" style="left:26px;top:505px;width:179px;height:19px;overflow:hidden"><div class="t" style="left:110.00px;top:4.49px;font-size:13.6px;line-height:13.6px;color:#000;transform:scaleX(0.9603);-webkit-text-stroke:0.25px #000;">43,1921101</div></div><div class="a" style="left:206px;top:505px;width:179px;height:19px;overflow:hidden"><div class="t" style="left:112.41px;top:4.49px;font-size:13.6px;line-height:13.6px;color:#000;transform:scaleX(0.9534);-webkit-text-stroke:0.25px #000;">-3,1907122</div></div><div class="a" style="left:386px;top:505px;width:179px;height:19px;overflow:hidden"><div class="t" style="left:2.00px;top:4.49px;font-size:13.6px;line-height:13.6px;color:#000;transform:scaleX(0.9892);-webkit-text-stroke:0.25px #000;">Escuela de Educación Infantil</div></div><div class="a" style="left:566px;top:505px;width:179px;height:19px;overflow:hidden"><div class="t" style="left:2.00px;top:4.49px;font-size:13.6px;line-height:13.6px;color:#000;transform:scaleX(0.9026);-webkit-text-stroke:0.25px #000;">PAÍS VASCO</div></div><div class="a" style="left:746px;top:505px;width:179px;height:19px;overflow:hidden"><div class="t" style="left:2.00px;top:4.49px;font-size:13.6px;line-height:13.6px;color:#000;transform:scaleX(0.9582);-webkit-text-stroke:0.25px #000;">Vizcaya</div></div><div class="a" style="left:926px;top:505px;width:179px;height:19px;overflow:hidden"><div class="t" style="left:2.00px;top:4.49px;font-size:13.6px;line-height:13.6px;color:#000;transform:scaleX(0.9755);-webkit-text-stroke:0.25px #000;">Balmaseda</div></div><div class="a" style="left:1106px;top:505px;width:179px;height:19px;overflow:hidden"><div class="t" style="left:2.00px;top:4.49px;font-size:13.6px;line-height:13.6px;color:#000;transform:scaleX(0.9472);-webkit-text-stroke:0.25px #000;">LA CALZADA, Z/G. 48800.  Balmaseda</div></div><div class="a" style="left:1286px;top:505px;width:179px;height:19px;overflow:hidden"><div class="t" style="left:2.00px;top:4.49px;font-size:13.6px;line-height:13.6px;color:#000;transform:scaleX(1.0042);-webkit-text-stroke:0.25px #000;">Centro Público</div></div><div class="a" style="left:1466px;top:505px;width:179px;height:19px;overflow:hidden"><div class="t" style="left:2.00px;top:4.49px;font-size:13.6px;line-height:13.6px;color:#000;transform:scaleX(0.9602);-webkit-text-stroke:0.25px #000;">Educación Básica</div></div><div class="a" style="left:1646px;top:505px;width:252px;height:19px;overflow:hidden"><div class="t" style="left:2.00px;top:4.49px;font-size:13.6px;line-height:13.6px;color:#000;transform:scaleX(0.9990);-webkit-text-stroke:0.25px #000;">Gobierno Vasco</div></div><div class="a" style="left:26px;top:525px;width:1872px;height:19px;background:#DDEBF7;"></div><div class="a" style="left:26px;top:524px;width:1872px;height:1px;background:#A2B4C6;"></div><div class="a" style="left:0px;top:524px;width:25px;height:1px;background:#C8C8C8;"></div><div class="t" style="left:5.50px;top:529.49px;font-size:13.6px;line-height:13.6px;color:#222;transform:scaleX(0.9256);">18</div><div class="a" style="left:26px;top:525px;width:179px;height:19px;overflow:hidden"><div class="t" style="left:110.00px;top:4.49px;font-size:13.6px;line-height:13.6px;color:#000;transform:scaleX(0.9467);-webkit-text-stroke:0.25px #000;">43,2203256</div></div><div class="a" style="left:206px;top:525px;width:179px;height:19px;overflow:hidden"><div class="t" style="left:119.41px;top:4.49px;font-size:13.6px;line-height:13.6px;color:#000;transform:scaleX(0.9569);-webkit-text-stroke:0.25px #000;">-2,734397</div></div><div class="a" style="left:386px;top:525px;width:179px;height:19px;overflow:hidden"><div class="t" style="left:2.00px;top:4.49px;font-size:13.6px;line-height:13.6px;color:#000;transform:scaleX(0.9807);-webkit-text-stroke:0.25px #000;">Escuela de Música ZUBIAUR Amorebieta</div></div><div class="a" style="left:566px;top:525px;width:179px;height:19px;overflow:hidden"><div class="t" style="left:2.00px;top:4.49px;font-size:13.6px;line-height:13.6px;color:#000;transform:scaleX(0.9026);-webkit-text-stroke:0.25px #000;">PAÍS VASCO</div></div><div class="a" style="left:746px;top:525px;width:179px;height:19px;overflow:hidden"><div class="t" style="left:2.00px;top:4.49px;font-size:13.6px;line-height:13.6px;color:#000;transform:scaleX(0.9582);-webkit-text-stroke:0.25px #000;">Vizcaya</div></div><div class="a" style="left:926px;top:525px;width:179px;height:19px;overflow:hidden"><div class="t" style="left:2.00px;top:4.49px;font-size:13.6px;line-height:13.6px;color:#000;transform:scaleX(1.0198);-webkit-text-stroke:0.25px #000;">Amorebieta-Etxano</div></div><div class="a" style="left:1106px;top:525px;width:179px;height:19px;overflow:hidden"><div class="t" style="left:2.00px;top:4.49px;font-size:13.6px;line-height:13.6px;color:#000;transform:scaleX(0.9562);-webkit-text-stroke:0.25px #000;">C/ ELEIZALDE,2. 48340.  Amorebieta</div></div><div class="a" style="left:1286px;top:525px;width:179px;height:19px;overflow:hidden"><div class="t" style="left:2.00px;top:4.49px;font-size:13.6px;line-height:13.6px;color:#000;transform:scaleX(1.0042);-webkit-text-stroke:0.25px #000;">Centro Público</div></div><div class="a" style="left:1466px;top:525px;width:179px;height:19px;overflow:hidden"><div class="t" style="left:2.00px;top:4.49px;font-size:13.6px;line-height:13.6px;color:#000;transform:scaleX(0.9716);-webkit-text-stroke:0.25px #000;">Enseñanzas Artísticas</div></div><div class="a" style="left:1646px;top:525px;width:252px;height:19px;overflow:hidden"><div class="t" style="left:2.00px;top:4.49px;font-size:13.6px;line-height:13.6px;color:#000;transform:scaleX(0.9990);-webkit-text-stroke:0.25px #000;">Gobierno Vasco</div></div><div class="a" style="left:26px;top:545px;width:1872px;height:19px;background:#FFFFFF;"></div><div class="a" style="left:205px;top:545px;width:1px;height:19px;background:#D4D4D4;"></div><div class="a" style="left:385px;top:545px;width:1px;height:19px;background:#D4D4D4;"></div><div class="a" style="left:565px;top:545px;width:1px;height:19px;background:#D4D4D4;"></div><div class="a" style="left:745px;top:545px;width:1px;height:19px;background:#D4D4D4;"></div><div class="a" style="left:925px;top:545px;width:1px;height:19px;background:#D4D4D4;"></div><div class="a" style="left:1105px;top:545px;width:1px;height:19px;background:#D4D4D4;"></div><div class="a" style="left:1285px;top:545px;width:1px;height:19px;background:#D4D4D4;"></div><div class="a" style="left:1465px;top:545px;width:1px;height:19px;background:#D4D4D4;"></div><div class="a" style="left:1645px;top:545px;width:1px;height:19px;background:#D4D4D4;"></div><div class="a" style="left:26px;top:544px;width:1872px;height:1px;background:#A2B4C6;"></div><div class="a" style="left:0px;top:544px;width:25px;height:1px;background:#C8C8C8;"></div><div class="t" style="left:5.50px;top:549.49px;font-size:13.6px;line-height:13.6px;color:#222;transform:scaleX(0.9256);">19</div><div class="a" style="left:386px;top:545px;width:179px;height:19px;overflow:hidden"><div class="t" style="left:2.00px;top:4.49px;font-size:13.6px;line-height:13.6px;color:#000;transform:scaleX(0.9892);-webkit-text-stroke:0.25px #000;">Escuela de Educación Infantil</div></div><div class="a" style="left:566px;top:545px;width:179px;height:19px;overflow:hidden"><div class="t" style="left:2.00px;top:4.49px;font-size:13.6px;line-height:13.6px;color:#000;transform:scaleX(0.9026);-webkit-text-stroke:0.25px #000;">PAÍS VASCO</div></div><div class="a" style="left:746px;top:545px;width:179px;height:19px;overflow:hidden"><div class="t" style="left:2.00px;top:4.49px;font-size:13.6px;line-height:13.6px;color:#000;transform:scaleX(0.9582);-webkit-text-stroke:0.25px #000;">Vizcaya</div></div><div class="a" style="left:926px;top:545px;width:179px;height:19px;overflow:hidden"><div class="t" style="left:2.00px;top:4.49px;font-size:13.6px;line-height:13.6px;color:#000;transform:scaleX(1.0059);-webkit-text-stroke:0.25px #000;">Bilbao</div></div><div class="a" style="left:1106px;top:545px;width:179px;height:19px;overflow:hidden"><div class="t" style="left:2.00px;top:4.49px;font-size:13.6px;line-height:13.6px;color:#000;transform:scaleX(0.9096);-webkit-text-stroke:0.25px #000;">ZAZPILANDA ERREPIDEA, 9. 48000</div></div><div class="a" style="left:1286px;top:545px;width:179px;height:19px;overflow:hidden"><div class="t" style="left:2.00px;top:4.49px;font-size:13.6px;line-height:13.6px;color:#000;transform:scaleX(1.0042);-webkit-text-stroke:0.25px #000;">Centro Público</div></div><div class="a" style="left:1466px;top:545px;width:179px;height:19px;overflow:hidden"><div class="t" style="left:2.00px;top:4.49px;font-size:13.6px;line-height:13.6px;color:#000;transform:scaleX(0.9602);-webkit-text-stroke:0.25px #000;">Educación Básica</div></div><div class="a" style="left:1646px;top:545px;width:252px;height:19px;overflow:hidden"><div class="t" style="left:2.00px;top:4.49px;font-size:13.6px;line-height:13.6px;color:#000;transform:scaleX(0.9990);-webkit-text-stroke:0.25px #000;">Gobierno Vasco</div></div><div class="a" style="left:26px;top:565px;width:1872px;height:19px;background:#DDEBF7;"></div><div class="a" style="left:26px;top:564px;width:1872px;height:1px;background:#A2B4C6;"></div><div class="a" style="left:0px;top:564px;width:25px;height:1px;background:#C8C8C8;"></div><div class="t" style="left:5.50px;top:569.49px;font-size:13.6px;line-height:13.6px;color:#222;transform:scaleX(0.9256);">20</div><div class="a" style="left:26px;top:565px;width:179px;height:19px;overflow:hidden"><div class="t" style="left:110.00px;top:4.49px;font-size:13.6px;line-height:13.6px;color:#000;transform:scaleX(0.9467);-webkit-text-stroke:0.25px #000;">43,5436664</div></div><div class="a" style="left:206px;top:565px;width:179px;height:19px;overflow:hidden"><div class="t" style="left:112.41px;top:4.49px;font-size:13.6px;line-height:13.6px;color:#000;transform:scaleX(0.9534);-webkit-text-stroke:0.25px #000;">-5,6646277</div></div><div class="a" style="left:386px;top:565px;width:179px;height:19px;overflow:hidden"><div class="t" style="left:2.00px;top:4.49px;font-size:13.6px;line-height:13.6px;color:#000;transform:scaleX(0.9892);-webkit-text-stroke:0.25px #000;">Escuela de Educación Infantil</div></div><div class="a" style="left:566px;top:565px;width:179px;height:19px;overflow:hidden"><div class="t" style="left:2.00px;top:4.49px;font-size:13.6px;line-height:13.6px;color:#000;transform:scaleX(0.8826);-webkit-text-stroke:0.25px #000;">ASTURIAS</div></div><div class="a" style="left:746px;top:565px;width:179px;height:19px;overflow:hidden"><div class="t" style="left:2.00px;top:4.49px;font-size:13.6px;line-height:13.6px;color:#000;transform:scaleX(1.0013);-webkit-text-stroke:0.25px #000;">Asturias</div></div><div class="a" style="left:926px;top:565px;width:179px;height:19px;overflow:hidden"><div class="t" style="left:2.00px;top:4.49px;font-size:13.6px;line-height:13.6px;color:#000;transform:scaleX(1.0174);-webkit-text-stroke:0.25px #000;">Gijón</div></div><div class="a" style="left:1106px;top:565px;width:179px;height:19px;overflow:hidden"><div class="t" style="left:2.00px;top:4.49px;font-size:13.6px;line-height:13.6px;color:#000;transform:scaleX(0.9363);-webkit-text-stroke:0.25px #000;">ALONSO QUINTANILLA S/N-BAJO</div></div><div class="a" style="left:1286px;top:565px;width:179px;height:19px;overflow:hidden"><div class="t" style="left:2.00px;top:4.49px;font-size:13.6px;line-height:13.6px;color:#000;transform:scaleX(1.0042);-webkit-text-stroke:0.25px #000;">Centro Público</div></div><div class="a" style="left:1466px;top:565px;width:179px;height:19px;overflow:hidden"><div class="t" style="left:2.00px;top:4.49px;font-size:13.6px;line-height:13.6px;color:#000;transform:scaleX(0.9602);-webkit-text-stroke:0.25px #000;">Educación Básica</div></div><div class="a" style="left:1646px;top:565px;width:252px;height:19px;overflow:hidden"><div class="t" style="left:2.00px;top:4.49px;font-size:13.6px;line-height:13.6px;color:#000;transform:scaleX(1.0097);-webkit-text-stroke:0.25px #000;">Gobierno del Principado de Asturias</div></div><div class="a" style="left:26px;top:585px;width:1872px;height:19px;background:#FFFFFF;"></div><div class="a" style="left:205px;top:585px;width:1px;height:19px;background:#D4D4D4;"></div><div class="a" style="left:385px;top:585px;width:1px;height:19px;background:#D4D4D4;"></div><div class="a" style="left:565px;top:585px;width:1px;height:19px;background:#D4D4D4;"></div><div class="a" style="left:745px;top:585px;width:1px;height:19px;background:#D4D4D4;"></div><div class="a" style="left:925px;top:585px;width:1px;height:19px;background:#D4D4D4;"></div><div class="a" style="left:1105px;top:585px;width:1px;height:19px;background:#D4D4D4;"></div><div class="a" style="left:1285px;top:585px;width:1px;height:19px;background:#D4D4D4;"></div><div class="a" style="left:1465px;top:585px;width:1px;height:19px;background:#D4D4D4;"></div><div class="a" style="left:1645px;top:585px;width:1px;height:19px;background:#D4D4D4;"></div><div class="a" style="left:26px;top:584px;width:1872px;height:1px;background:#A2B4C6;"></div><div class="a" style="left:0px;top:584px;width:25px;height:1px;background:#C8C8C8;"></div><div class="t" style="left:5.50px;top:589.49px;font-size:13.6px;line-height:13.6px;color:#222;transform:scaleX(0.9256);">21</div><div class="a" style="left:26px;top:585px;width:179px;height:19px;overflow:hidden"><div class="t" style="left:110.00px;top:4.49px;font-size:13.6px;line-height:13.6px;color:#000;transform:scaleX(0.9467);-webkit-text-stroke:0.25px #000;">43,2203256</div></div><div class="a" style="left:206px;top:585px;width:179px;height:19px;overflow:hidden"><div class="t" style="left:119.41px;top:4.49px;font-size:13.6px;line-height:13.6px;color:#000;transform:scaleX(0.9569);-webkit-text-stroke:0.25px #000;">-2,734397</div></div><div class="a" style="left:386px;top:585px;width:179px;height:19px;overflow:hidden"><div class="t" style="left:2.00px;top:4.49px;font-size:13.6px;line-height:13.6px;color:#000;transform:scaleX(0.9454);-webkit-text-stroke:0.25px #000;">Colegio ANDRA MARI IKASTOLA</div></div><div class="a" style="left:566px;top:585px;width:179px;height:19px;overflow:hidden"><div class="t" style="left:2.00px;top:4.49px;font-size:13.6px;line-height:13.6px;color:#000;transform:scaleX(0.9026);-webkit-text-stroke:0.25px #000;">PAÍS VASCO</div></div><div class="a" style="left:746px;top:585px;width:179px;height:19px;overflow:hidden"><div class="t" style="left:2.00px;top:4.49px;font-size:13.6px;line-height:13.6px;color:#000;transform:scaleX(0.9582);-webkit-text-stroke:0.25px #000;">Vizcaya</div></div><div class="a" style="left:926px;top:585px;width:179px;height:19px;overflow:hidden"><div class="t" style="left:2.00px;top:4.49px;font-size:13.6px;line-height:13.6px;color:#000;transform:scaleX(1.0198);-webkit-text-stroke:0.25px #000;">Amorebieta-Etxano</div></div><div class="a" style="left:1106px;top:585px;width:179px;height:19px;overflow:hidden"><div class="t" style="left:2.00px;top:4.49px;font-size:13.6px;line-height:13.6px;color:#000;transform:scaleX(0.9661);-webkit-text-stroke:0.25px #000;">LARREA AUZOA, S/N. 48340.  Amorebieta</div></div><div class="a" style="left:1286px;top:585px;width:179px;height:19px;overflow:hidden"><div class="t" style="left:2.00px;top:4.49px;font-size:13.6px;line-height:13.6px;color:#000;transform:scaleX(1.0014);-webkit-text-stroke:0.25px #000;">Centro Privado - Concertado</div></div><div class="a" style="left:1466px;top:585px;width:179px;height:19px;overflow:hidden"><div class="t" style="left:2.00px;top:4.49px;font-size:13.6px;line-height:13.6px;color:#000;transform:scaleX(0.9602);-webkit-text-stroke:0.25px #000;">Educación Básica</div></div><div class="a" style="left:26px;top:605px;width:1872px;height:19px;background:#DDEBF7;"></div><div class="a" style="left:26px;top:604px;width:1872px;height:1px;background:#A2B4C6;"></div><div class="a" style="left:0px;top:604px;width:25px;height:1px;background:#C8C8C8;"></div><div class="t" style="left:5.50px;top:609.49px;font-size:13.6px;line-height:13.6px;color:#222;transform:scaleX(0.9256);">22</div><div class="a" style="left:26px;top:605px;width:179px;height:19px;overflow:hidden"><div class="t" style="left:117.00px;top:4.49px;font-size:13.6px;line-height:13.6px;color:#000;transform:scaleX(0.9492);-webkit-text-stroke:0.25px #000;">43,251743</div></div><div class="a" style="left:206px;top:605px;width:179px;height:19px;overflow:hidden"><div class="t" style="left:119.41px;top:4.49px;font-size:13.6px;line-height:13.6px;color:#000;transform:scaleX(0.9569);-webkit-text-stroke:0.25px #000;">-2,715721</div></div><div class="a" style="left:386px;top:605px;width:179px;height:19px;overflow:hidden"><div class="t" style="left:2.00px;top:4.49px;font-size:13.6px;line-height:13.6px;color:#000;transform:scaleX(0.9892);-webkit-text-stroke:0.25px #000;">Escuela de Educación Infantil</div></div><div class="a" style="left:566px;top:605px;width:179px;height:19px;overflow:hidden"><div class="t" style="left:2.00px;top:4.49px;font-size:13.6px;line-height:13.6px;color:#000;transform:scaleX(0.9026);-webkit-text-stroke:0.25px #000;">PAÍS VASCO</div></div><div class="a" style="left:746px;top:605px;width:179px;height:19px;overflow:hidden"><div class="t" style="left:2.00px;top:4.49px;font-size:13.6px;line-height:13.6px;color:#000;transform:scaleX(0.9582);-webkit-text-stroke:0.25px #000;">Vizcaya</div></div><div class="a" style="left:926px;top:605px;width:179px;height:19px;overflow:hidden"><div class="t" style="left:2.00px;top:4.49px;font-size:13.6px;line-height:13.6px;color:#000;transform:scaleX(1.0198);-webkit-text-stroke:0.25px #000;">Amorebieta-Etxano</div></div><div class="a" style="left:1106px;top:605px;width:179px;height:19px;overflow:hidden"><div class="t" style="left:2.00px;top:4.49px;font-size:13.6px;line-height:13.6px;color:#000;transform:scaleX(0.9629);-webkit-text-stroke:0.25px #000;">LARREA AUZOLA,Z/G. 48340.  Amorebieta</div></div><div class="a" style="left:1286px;top:605px;width:179px;height:19px;overflow:hidden"><div class="t" style="left:2.00px;top:4.49px;font-size:13.6px;line-height:13.6px;color:#000;transform:scaleX(1.0042);-webkit-text-stroke:0.25px #000;">Centro Público</div></div><div class="a" style="left:1466px;top:605px;width:179px;height:19px;overflow:hidden"><div class="t" style="left:2.00px;top:4.49px;font-size:13.6px;line-height:13.6px;color:#000;transform:scaleX(0.9602);-webkit-text-stroke:0.25px #000;">Educación Básica</div></div><div class="a" style="left:1646px;top:605px;width:252px;height:19px;overflow:hidden"><div class="t" style="left:2.00px;top:4.49px;font-size:13.6px;line-height:13.6px;color:#000;transform:scaleX(0.9990);-webkit-text-stroke:0.25px #000;">Gobierno Vasco</div></div><div class="a" style="left:26px;top:625px;width:1872px;height:19px;background:#FFFFFF;"></div><div class="a" style="left:205px;top:625px;width:1px;height:19px;background:#D4D4D4;"></div><div class="a" style="left:385px;top:625px;width:1px;height:19px;background:#D4D4D4;"></div><div class="a" style="left:565px;top:625px;width:1px;height:19px;background:#D4D4D4;"></div><div class="a" style="left:745px;top:625px;width:1px;height:19px;background:#D4D4D4;"></div><div class="a" style="left:925px;top:625px;width:1px;height:19px;background:#D4D4D4;"></div><div class="a" style="left:1105px;top:625px;width:1px;height:19px;background:#D4D4D4;"></div><div class="a" style="left:1285px;top:625px;width:1px;height:19px;background:#D4D4D4;"></div><div class="a" style="left:1465px;top:625px;width:1px;height:19px;background:#D4D4D4;"></div><div class="a" style="left:1645px;top:625px;width:1px;height:19px;background:#D4D4D4;"></div><div class="a" style="left:26px;top:624px;width:1872px;height:1px;background:#A2B4C6;"></div><div class="a" style="left:0px;top:624px;width:25px;height:1px;background:#C8C8C8;"></div><div class="t" style="left:5.50px;top:629.49px;font-size:13.6px;line-height:13.6px;color:#222;transform:scaleX(0.9256);">23</div><div class="a" style="left:386px;top:625px;width:179px;height:19px;overflow:hidden"><div class="t" style="left:2.00px;top:4.49px;font-size:13.6px;line-height:13.6px;color:#000;transform:scaleX(0.9892);-webkit-text-stroke:0.25px #000;">Escuela de Educación Infantil</div></div><div class="a" style="left:566px;top:625px;width:179px;height:19px;overflow:hidden"><div class="t" style="left:2.00px;top:4.49px;font-size:13.6px;line-height:13.6px;color:#000;transform:scaleX(0.9026);-webkit-text-stroke:0.25px #000;">PAÍS VASCO</div></div><div class="a" style="left:746px;top:625px;width:179px;height:19px;overflow:hidden"><div class="t" style="left:2.00px;top:4.49px;font-size:13.6px;line-height:13.6px;color:#000;transform:scaleX(0.9832);-webkit-text-stroke:0.25px #000;">Guipúzcoa</div></div><div class="a" style="left:926px;top:625px;width:179px;height:19px;overflow:hidden"><div class="t" style="left:2.00px;top:4.49px;font-size:13.6px;line-height:13.6px;color:#000;transform:scaleX(0.9921);-webkit-text-stroke:0.25px #000;">Zerain</div></div><div class="a" style="left:1106px;top:625px;width:179px;height:19px;overflow:hidden"><div class="t" style="left:2.00px;top:4.49px;font-size:13.6px;line-height:13.6px;color:#000;transform:scaleX(0.9221);-webkit-text-stroke:0.25px #000;">KULTUR ETXEA. 20214.  Zerain</div></div><div class="a" style="left:1286px;top:625px;width:179px;height:19px;overflow:hidden"><div class="t" style="left:2.00px;top:4.49px;font-size:13.6px;line-height:13.6px;color:#000;transform:scaleX(1.0042);-webkit-text-stroke:0.25px #000;">Centro Público</div></div><div class="a" style="left:1466px;top:625px;width:179px;height:19px;overflow:hidden"><div class="t" style="left:2.00px;top:4.49px;font-size:13.6px;line-height:13.6px;color:#000;transform:scaleX(0.9602);-webkit-text-stroke:0.25px #000;">Educación Básica</div></div><div class="a" style="left:1646px;top:625px;width:252px;height:19px;overflow:hidden"><div class="t" style="left:2.00px;top:4.49px;font-size:13.6px;line-height:13.6px;color:#000;transform:scaleX(0.9990);-webkit-text-stroke:0.25px #000;">Gobierno Vasco</div></div><div class="a" style="left:26px;top:645px;width:1872px;height:19px;background:#DDEBF7;"></div><div class="a" style="left:26px;top:644px;width:1872px;height:1px;background:#A2B4C6;"></div><div class="a" style="left:0px;top:644px;width:25px;height:1px;background:#C8C8C8;"></div><div class="t" style="left:5.50px;top:649.49px;font-size:13.6px;line-height:13.6px;color:#222;transform:scaleX(0.9256);">24</div><div class="a" style="left:26px;top:645px;width:179px;height:19px;overflow:hidden"><div class="t" style="left:110.00px;top:4.49px;font-size:13.6px;line-height:13.6px;color:#000;transform:scaleX(0.9467);-webkit-text-stroke:0.25px #000;">43,1523023</div></div><div class="a" style="left:206px;top:645px;width:179px;height:19px;overflow:hidden"><div class="t" style="left:112.41px;top:4.49px;font-size:13.6px;line-height:13.6px;color:#000;transform:scaleX(0.9534);-webkit-text-stroke:0.25px #000;">-2,6093192</div></div><div class="a" style="left:386px;top:645px;width:179px;height:19px;overflow:hidden"><div class="t" style="left:2.00px;top:4.49px;font-size:13.6px;line-height:13.6px;color:#000;transform:scaleX(0.9892);-webkit-text-stroke:0.25px #000;">Escuela de Educación Infantil</div></div><div class="a" style="left:566px;top:645px;width:179px;height:19px;overflow:hidden"><div class="t" style="left:2.00px;top:4.49px;font-size:13.6px;line-height:13.6px;color:#000;transform:scaleX(0.9026);-webkit-text-stroke:0.25px #000;">PAÍS VASCO</div></div><div class="a" style="left:746px;top:645px;width:179px;height:19px;overflow:hidden"><div class="t" style="left:2.00px;top:4.49px;font-size:13.6px;line-height:13.6px;color:#000;transform:scaleX(0.9582);-webkit-text-stroke:0.25px #000;">Vizcaya</div></div><div class="a" style="left:926px;top:645px;width:179px;height:19px;overflow:hidden"><div class="t" style="left:2.00px;top:4.49px;font-size:13.6px;line-height:13.6px;color:#000;transform:scaleX(1.0194);-webkit-text-stroke:0.25px #000;">Abadiño</div></div><div class="a" style="left:1106px;top:645px;width:179px;height:19px;overflow:hidden"><div class="t" style="left:2.00px;top:4.49px;font-size:13.6px;line-height:13.6px;color:#000;transform:scaleX(0.9591);-webkit-text-stroke:0.25px #000;">ZELAIETA. 48220.  Abadiño-Zelaieta</div></div><div class="a" style="left:1286px;top:645px;width:179px;height:19px;overflow:hidden"><div class="t" style="left:2.00px;top:4.49px;font-size:13.6px;line-height:13.6px;color:#000;transform:scaleX(1.0042);-webkit-text-stroke:0.25px #000;">Centro Público</div></div><div class="a" style="left:1466px;top:645px;width:179px;height:19px;overflow:hidden"><div class="t" style="left:2.00px;top:4.49px;font-size:13.6px;line-height:13.6px;color:#000;transform:scaleX(0.9602);-webkit-text-stroke:0.25px #000;">Educación Básica</div></div><div class="a" style="left:1646px;top:645px;width:252px;height:19px;overflow:hidden"><div class="t" style="left:2.00px;top:4.49px;font-size:13.6px;line-height:13.6px;color:#000;transform:scaleX(0.9990);-webkit-text-stroke:0.25px #000;">Gobierno Vasco</div></div><div class="a" style="left:26px;top:665px;width:1872px;height:19px;background:#FFFFFF;"></div><div class="a" style="left:205px;top:665px;width:1px;height:19px;background:#D4D4D4;"></div><div class="a" style="left:385px;top:665px;width:1px;height:19px;background:#D4D4D4;"></div><div class="a" style="left:565px;top:665px;width:1px;height:19px;background:#D4D4D4;"></div><div class="a" style="left:745px;top:665px;width:1px;height:19px;background:#D4D4D4;"></div><div class="a" style="left:925px;top:665px;width:1px;height:19px;background:#D4D4D4;"></div><div class="a" style="left:1105px;top:665px;width:1px;height:19px;background:#D4D4D4;"></div><div class="a" style="left:1285px;top:665px;width:1px;height:19px;background:#D4D4D4;"></div><div class="a" style="left:1465px;top:665px;width:1px;height:19px;background:#D4D4D4;"></div><div class="a" style="left:1645px;top:665px;width:1px;height:19px;background:#D4D4D4;"></div><div class="a" style="left:26px;top:664px;width:1872px;height:1px;background:#A2B4C6;"></div><div class="a" style="left:0px;top:664px;width:25px;height:1px;background:#C8C8C8;"></div><div class="t" style="left:5.50px;top:669.49px;font-size:13.6px;line-height:13.6px;color:#222;transform:scaleX(0.9256);">25</div><div class="a" style="left:386px;top:665px;width:179px;height:19px;overflow:hidden"><div class="t" style="left:2.00px;top:4.49px;font-size:13.6px;line-height:13.6px;color:#000;transform:scaleX(0.9892);-webkit-text-stroke:0.25px #000;">Escuela de Educación Infantil</div></div><div class="a" style="left:566px;top:665px;width:179px;height:19px;overflow:hidden"><div class="t" style="left:2.00px;top:4.49px;font-size:13.6px;line-height:13.6px;color:#000;transform:scaleX(0.9026);-webkit-text-stroke:0.25px #000;">PAÍS VASCO</div></div><div class="a" style="left:746px;top:665px;width:179px;height:19px;overflow:hidden"><div class="t" style="left:2.00px;top:4.49px;font-size:13.6px;line-height:13.6px;color:#000;transform:scaleX(0.9832);-webkit-text-stroke:0.25px #000;">Guipúzcoa</div></div><div class="a" style="left:926px;top:665px;width:179px;height:19px;overflow:hidden"><div class="t" style="left:2.00px;top:4.49px;font-size:13.6px;line-height:13.6px;color:#000;transform:scaleX(0.9604);-webkit-text-stroke:0.25px #000;">Zegama</div></div><div class="a" style="left:1106px;top:665px;width:179px;height:19px;overflow:hidden"><div class="t" style="left:2.00px;top:4.49px;font-size:13.6px;line-height:13.6px;color:#000;transform:scaleX(0.9265);-webkit-text-stroke:0.25px #000;">UGARTE ZELAI, 3-5. 20215.  Zegama</div></div><div class="a" style="left:1286px;top:665px;width:179px;height:19px;overflow:hidden"><div class="t" style="left:2.00px;top:4.49px;font-size:13.6px;line-height:13.6px;color:#000;transform:scaleX(1.0042);-webkit-text-stroke:0.25px #000;">Centro Público</div></div><div class="a" style="left:1466px;top:665px;width:179px;height:19px;overflow:hidden"><div class="t" style="left:2.00px;top:4.49px;font-size:13.6px;line-height:13.6px;color:#000;transform:scaleX(0.9602);-webkit-text-stroke:0.25px #000;">Educación Básica</div></div><div class="a" style="left:1646px;top:665px;width:252px;height:19px;overflow:hidden"><div class="t" style="left:2.00px;top:4.49px;font-size:13.6px;line-height:13.6px;color:#000;transform:scaleX(0.9990);-webkit-text-stroke:0.25px #000;">Gobierno Vasco</div></div><div class="a" style="left:26px;top:685px;width:1872px;height:19px;background:#DDEBF7;"></div><div class="a" style="left:26px;top:684px;width:1872px;height:1px;background:#A2B4C6;"></div><div class="a" style="left:0px;top:684px;width:25px;height:1px;background:#C8C8C8;"></div><div class="t" style="left:5.50px;top:689.49px;font-size:13.6px;line-height:13.6px;color:#222;transform:scaleX(0.9256);">26</div><div class="a" style="left:26px;top:685px;width:179px;height:19px;overflow:hidden"><div class="t" style="left:110.00px;top:4.49px;font-size:13.6px;line-height:13.6px;color:#000;transform:scaleX(0.9467);-webkit-text-stroke:0.25px #000;">43,1493945</div></div><div class="a" style="left:206px;top:685px;width:179px;height:19px;overflow:hidden"><div class="t" style="left:112.41px;top:4.49px;font-size:13.6px;line-height:13.6px;color:#000;transform:scaleX(0.9534);-webkit-text-stroke:0.25px #000;">-2,8450719</div></div><div class="a" style="left:386px;top:685px;width:179px;height:19px;overflow:hidden"><div class="t" style="left:2.00px;top:4.49px;font-size:13.6px;line-height:13.6px;color:#000;transform:scaleX(0.9892);-webkit-text-stroke:0.25px #000;">Escuela de Educación Infantil</div></div><div class="a" style="left:566px;top:685px;width:179px;height:19px;overflow:hidden"><div class="t" style="left:2.00px;top:4.49px;font-size:13.6px;line-height:13.6px;color:#000;transform:scaleX(0.9026);-webkit-text-stroke:0.25px #000;">PAÍS VASCO</div></div><div class="a" style="left:746px;top:685px;width:179px;height:19px;overflow:hidden"><div class="t" style="left:2.00px;top:4.49px;font-size:13.6px;line-height:13.6px;color:#000;transform:scaleX(0.9582);-webkit-text-stroke:0.25px #000;">Vizcaya</div></div><div class="a" style="left:926px;top:685px;width:179px;height:19px;overflow:hidden"><div class="t" style="left:2.00px;top:4.49px;font-size:13.6px;line-height:13.6px;color:#000;transform:scaleX(1.0069);-webkit-text-stroke:0.25px #000;">Zeberio</div></div><div class="a" style="left:1106px;top:685px;width:179px;height:19px;overflow:hidden"><div class="t" style="left:2.00px;top:4.49px;font-size:13.6px;line-height:13.6px;color:#000;transform:scaleX(0.9229);-webkit-text-stroke:0.25px #000;">ZUBIALDE AUZOA, 21 BEHEA. 48</div></div><div class="a" style="left:1286px;top:685px;width:179px;height:19px;overflow:hidden"><div class="t" style="left:2.00px;top:4.49px;font-size:13.6px;line-height:13.6px;color:#000;transform:scaleX(1.0042);-webkit-text-stroke:0.25px #000;">Centro Público</div></div><div class="a" style="left:1466px;top:685px;width:179px;height:19px;overflow:hidden"><div class="t" style="left:2.00px;top:4.49px;font-size:13.6px;line-height:13.6px;color:#000;transform:scaleX(0.9602);-webkit-text-stroke:0.25px #000;">Educación Básica</div></div><div class="a" style="left:1646px;top:685px;width:252px;height:19px;overflow:hidden"><div class="t" style="left:2.00px;top:4.49px;font-size:13.6px;line-height:13.6px;color:#000;transform:scaleX(0.9990);-webkit-text-stroke:0.25px #000;">Gobierno Vasco</div></div><div class="a" style="left:26px;top:705px;width:1872px;height:19px;background:#FFFFFF;"></div><div class="a" style="left:205px;top:705px;width:1px;height:19px;background:#D4D4D4;"></div><div class="a" style="left:385px;top:705px;width:1px;height:19px;background:#D4D4D4;"></div><div class="a" style="left:565px;top:705px;width:1px;height:19px;background:#D4D4D4;"></div><div class="a" style="left:745px;top:705px;width:1px;height:19px;background:#D4D4D4;"></div><div class="a" style="left:925px;top:705px;width:1px;height:19px;background:#D4D4D4;"></div><div class="a" style="left:1105px;top:705px;width:1px;height:19px;background:#D4D4D4;"></div><div class="a" style="left:1285px;top:705px;width:1px;height:19px;background:#D4D4D4;"></div><div class="a" style="left:1465px;top:705px;width:1px;height:19px;background:#D4D4D4;"></div><div class="a" style="left:1645px;top:705px;width:1px;height:19px;background:#D4D4D4;"></div><div class="a" style="left:26px;top:704px;width:1872px;height:1px;background:#A2B4C6;"></div><div class="a" style="left:0px;top:704px;width:25px;height:1px;background:#C8C8C8;"></div><div class="t" style="left:5.50px;top:709.49px;font-size:13.6px;line-height:13.6px;color:#222;transform:scaleX(0.9256);">27</div><div class="a" style="left:386px;top:705px;width:179px;height:19px;overflow:hidden"><div class="t" style="left:2.00px;top:4.49px;font-size:13.6px;line-height:13.6px;color:#000;transform:scaleX(0.9892);-webkit-text-stroke:0.25px #000;">Escuela de Educación Infantil</div></div><div class="a" style="left:566px;top:705px;width:179px;height:19px;overflow:hidden"><div class="t" style="left:2.00px;top:4.49px;font-size:13.6px;line-height:13.6px;color:#000;transform:scaleX(0.9026);-webkit-text-stroke:0.25px #000;">PAÍS VASCO</div></div><div class="a" style="left:746px;top:705px;width:179px;height:19px;overflow:hidden"><div class="t" style="left:2.00px;top:4.49px;font-size:13.6px;line-height:13.6px;color:#000;transform:scaleX(0.9582);-webkit-text-stroke:0.25px #000;">Vizcaya</div></div><div class="a" style="left:926px;top:705px;width:179px;height:19px;overflow:hidden"><div class="t" style="left:2.00px;top:4.49px;font-size:13.6px;line-height:13.6px;color:#000;-webkit-text-stroke:0.25px #000;">Zeanuri</div></div><div class="a" style="left:1106px;top:705px;width:179px;height:19px;overflow:hidden"><div class="t" style="left:2.00px;top:4.49px;font-size:13.6px;line-height:13.6px;color:#000;transform:scaleX(0.9401);-webkit-text-stroke:0.25px #000;">ALBAKOA AUZUNEA, 27. 48144</div></div><div class="a" style="left:1286px;top:705px;width:179px;height:19px;overflow:hidden"><div class="t" style="left:2.00px;top:4.49px;font-size:13.6px;line-height:13.6px;color:#000;transform:scaleX(1.0042);-webkit-text-stroke:0.25px #000;">Centro Público</div></div><div class="a" style="left:1466px;top:705px;width:179px;height:19px;overflow:hidden"><div class="t" style="left:2.00px;top:4.49px;font-size:13.6px;line-height:13.6px;color:#000;transform:scaleX(0.9602);-webkit-text-stroke:0.25px #000;">Educación Básica</div></div><div class="a" style="left:1646px;top:705px;width:252px;height:19px;overflow:hidden"><div class="t" style="left:2.00px;top:4.49px;font-size:13.6px;line-height:13.6px;color:#000;transform:scaleX(0.9990);-webkit-text-stroke:0.25px #000;">Gobierno Vasco</div></div><div class="a" style="left:26px;top:725px;width:1872px;height:19px;background:#DDEBF7;"></div><div class="a" style="left:26px;top:724px;width:1872px;height:1px;background:#A2B4C6;"></div><div class="a" style="left:0px;top:724px;width:25px;height:1px;background:#C8C8C8;"></div><div class="t" style="left:5.50px;top:729.49px;font-size:13.6px;line-height:13.6px;color:#222;transform:scaleX(0.9256);">28</div><div class="a" style="left:26px;top:725px;width:179px;height:19px;overflow:hidden"><div class="t" style="left:117.00px;top:4.49px;font-size:13.6px;line-height:13.6px;color:#000;transform:scaleX(0.9492);-webkit-text-stroke:0.25px #000;">43,283953</div></div><div class="a" style="left:206px;top:725px;width:179px;height:19px;overflow:hidden"><div class="t" style="left:112.41px;top:4.49px;font-size:13.6px;line-height:13.6px;color:#000;transform:scaleX(0.9534);-webkit-text-stroke:0.25px #000;">-2,1606955</div></div><div class="a" style="left:386px;top:725px;width:179px;height:19px;overflow:hidden"><div class="t" style="left:2.00px;top:4.49px;font-size:13.6px;line-height:13.6px;color:#000;transform:scaleX(0.9214);-webkit-text-stroke:0.25px #000;">Colegio SALBATORE MITXELENA</div></div><div class="a" style="left:566px;top:725px;width:179px;height:19px;overflow:hidden"><div class="t" style="left:2.00px;top:4.49px;font-size:13.6px;line-height:13.6px;color:#000;transform:scaleX(0.9026);-webkit-text-stroke:0.25px #000;">PAÍS VASCO</div></div><div class="a" style="left:746px;top:725px;width:179px;height:19px;overflow:hidden"><div class="t" style="left:2.00px;top:4.49px;font-size:13.6px;line-height:13.6px;color:#000;transform:scaleX(0.9832);-webkit-text-stroke:0.25px #000;">Guipúzcoa</div></div><div class="a" style="left:926px;top:725px;width:179px;height:19px;overflow:hidden"><div class="t" style="left:2.00px;top:4.49px;font-size:13.6px;line-height:13.6px;color:#000;transform:scaleX(0.9861);-webkit-text-stroke:0.25px #000;">Zarautz</div></div><div class="a" style="left:1106px;top:725px;width:179px;height:19px;overflow:hidden"><div class="t" style="left:2.00px;top:4.49px;font-size:13.6px;line-height:13.6px;color:#000;transform:scaleX(0.9402);-webkit-text-stroke:0.25px #000;">MARIA ETXE-TXIKI, 14. 20800.  Zarautz</div></div><div class="a" style="left:1286px;top:725px;width:179px;height:19px;overflow:hidden"><div class="t" style="left:2.00px;top:4.49px;font-size:13.6px;line-height:13.6px;color:#000;transform:scaleX(1.0014);-webkit-text-stroke:0.25px #000;">Centro Privado - Concertado</div></div><div class="a" style="left:1466px;top:725px;width:179px;height:19px;overflow:hidden"><div class="t" style="left:2.00px;top:4.49px;font-size:13.6px;line-height:13.6px;color:#000;transform:scaleX(0.9602);-webkit-text-stroke:0.25px #000;">Educación Básica</div></div><div class="a" style="left:26px;top:745px;width:1872px;height:19px;background:#FFFFFF;"></div><div class="a" style="left:205px;top:745px;width:1px;height:19px;background:#D4D4D4;"></div><div class="a" style="left:385px;top:745px;width:1px;height:19px;background:#D4D4D4;"></div><div class="a" style="left:565px;top:745px;width:1px;height:19px;background:#D4D4D4;"></div><div class="a" style="left:745px;top:745px;width:1px;height:19px;background:#D4D4D4;"></div><div class="a" style="left:925px;top:745px;width:1px;height:19px;background:#D4D4D4;"></div><div class="a" style="left:1105px;top:745px;width:1px;height:19px;background:#D4D4D4;"></div><div class="a" style="left:1285px;top:745px;width:1px;height:19px;background:#D4D4D4;"></div><div class="a" style="left:1465px;top:745px;width:1px;height:19px;background:#D4D4D4;"></div><div class="a" style="left:1645px;top:745px;width:1px;height:19px;background:#D4D4D4;"></div><div class="a" style="left:26px;top:744px;width:1872px;height:1px;background:#A2B4C6;"></div><div class="a" style="left:0px;top:744px;width:25px;height:1px;background:#C8C8C8;"></div><div class="t" style="left:5.50px;top:749.49px;font-size:13.6px;line-height:13.6px;color:#222;transform:scaleX(0.9256);">29</div><div class="a" style="left:26px;top:745px;width:179px;height:19px;overflow:hidden"><div class="t" style="left:110.00px;top:4.49px;font-size:13.6px;line-height:13.6px;color:#000;transform:scaleX(0.9467);-webkit-text-stroke:0.25px #000;">43,2808617</div></div><div class="a" style="left:206px;top:745px;width:179px;height:19px;overflow:hidden"><div class="t" style="left:112.41px;top:4.49px;font-size:13.6px;line-height:13.6px;color:#000;transform:scaleX(0.9534);-webkit-text-stroke:0.25px #000;">-2,1607583</div></div><div class="a" style="left:386px;top:745px;width:179px;height:19px;overflow:hidden"><div class="t" style="left:2.00px;top:4.49px;font-size:13.6px;line-height:13.6px;color:#000;transform:scaleX(0.9892);-webkit-text-stroke:0.25px #000;">Escuela de Educación Infantil</div></div><div class="a" style="left:566px;top:745px;width:179px;height:19px;overflow:hidden"><div class="t" style="left:2.00px;top:4.49px;font-size:13.6px;line-height:13.6px;color:#000;transform:scaleX(0.9026);-webkit-text-stroke:0.25px #000;">PAÍS VASCO</div></div><div class="a" style="left:746px;top:745px;width:179px;height:19px;overflow:hidden"><div class="t" style="left:2.00px;top:4.49px;font-size:13.6px;line-height:13.6px;color:#000;transform:scaleX(0.9832);-webkit-text-stroke:0.25px #000;">Guipúzcoa</div></div><div class="a" style="left:926px;top:745px;width:179px;height:19px;overflow:hidden"><div class="t" style="left:2.00px;top:4.49px;font-size:13.6px;line-height:13.6px;color:#000;transform:scaleX(0.9861);-webkit-text-stroke:0.25px #000;">Zarautz</div></div><div class="a" style="left:1106px;top:745px;width:179px;height:19px;overflow:hidden"><div class="t" style="left:2.00px;top:4.49px;font-size:13.6px;line-height:13.6px;color:#000;transform:scaleX(0.9672);-webkit-text-stroke:0.25px #000;">INDAMENDI, 1. 20800.  Zarautz</div></div><div class="a" style="left:1286px;top:745px;width:179px;height:19px;overflow:hidden"><div class="t" style="left:2.00px;top:4.49px;font-size:13.6px;line-height:13.6px;color:#000;transform:scaleX(1.0042);-webkit-text-stroke:0.25px #000;">Centro Público</div></div><div class="a" style="left:1466px;top:745px;width:179px;height:19px;overflow:hidden"><div class="t" style="left:2.00px;top:4.49px;font-size:13.6px;line-height:13.6px;color:#000;transform:scaleX(0.9602);-webkit-text-stroke:0.25px #000;">Educación Básica</div></div><div class="a" style="left:1646px;top:745px;width:252px;height:19px;overflow:hidden"><div class="t" style="left:2.00px;top:4.49px;font-size:13.6px;line-height:13.6px;color:#000;transform:scaleX(0.9990);-webkit-text-stroke:0.25px #000;">Gobierno Vasco</div></div><div class="a" style="left:26px;top:765px;width:1872px;height:19px;background:#DDEBF7;"></div><div class="a" style="left:26px;top:764px;width:1872px;height:1px;background:#A2B4C6;"></div><div class="a" style="left:0px;top:764px;width:25px;height:1px;background:#C8C8C8;"></div><div class="t" style="left:5.50px;top:769.49px;font-size:13.6px;line-height:13.6px;color:#222;transform:scaleX(0.9256);">30</div><div class="a" style="left:386px;top:765px;width:179px;height:19px;overflow:hidden"><div class="t" style="left:2.00px;top:4.49px;font-size:13.6px;line-height:13.6px;color:#000;transform:scaleX(0.9892);-webkit-text-stroke:0.25px #000;">Escuela de Educación Infantil</div></div><div class="a" style="left:566px;top:765px;width:179px;height:19px;overflow:hidden"><div class="t" style="left:2.00px;top:4.49px;font-size:13.6px;line-height:13.6px;color:#000;transform:scaleX(0.9026);-webkit-text-stroke:0.25px #000;">PAÍS VASCO</div></div><div class="a" style="left:746px;top:765px;width:179px;height:19px;overflow:hidden"><div class="t" style="left:2.00px;top:4.49px;font-size:13.6px;line-height:13.6px;color:#000;transform:scaleX(0.9582);-webkit-text-stroke:0.25px #000;">Vizcaya</div></div><div class="a" style="left:926px;top:765px;width:179px;height:19px;overflow:hidden"><div class="t" style="left:2.00px;top:4.49px;font-size:13.6px;line-height:13.6px;color:#000;transform:scaleX(1.0095);-webkit-text-stroke:0.25px #000;">Zaratamo</div></div><div class="a" style="left:1106px;top:765px;width:179px;height:19px;overflow:hidden"><div class="t" style="left:2.00px;top:4.49px;font-size:13.6px;line-height:13.6px;color:#000;transform:scaleX(0.9403);-webkit-text-stroke:0.25px #000;">GURUTZALDE AUZOA. 48480.  Zaratamo</div></div><div class="a" style="left:1286px;top:765px;width:179px;height:19px;overflow:hidden"><div class="t" style="left:2.00px;top:4.49px;font-size:13.6px;line-height:13.6px;color:#000;transform:scaleX(1.0042);-webkit-text-stroke:0.25px #000;">Centro Público</div></div><div class="a" style="left:1466px;top:765px;width:179px;height:19px;overflow:hidden"><div class="t" style="left:2.00px;top:4.49px;font-size:13.6px;line-height:13.6px;color:#000;transform:scaleX(0.9602);-webkit-text-stroke:0.25px #000;">Educación Básica</div></div><div class="a" style="left:1646px;top:765px;width:252px;height:19px;overflow:hidden"><div class="t" style="left:2.00px;top:4.49px;font-size:13.6px;line-height:13.6px;color:#000;transform:scaleX(0.9990);-webkit-text-stroke:0.25px #000;">Gobierno Vasco</div></div><div class="a" style="left:26px;top:785px;width:1872px;height:19px;background:#FFFFFF;"></div><div class="a" style="left:205px;top:785px;width:1px;height:19px;background:#D4D4D4;"></div><div class="a" style="left:385px;top:785px;width:1px;height:19px;background:#D4D4D4;"></div><div class="a" style="left:565px;top:785px;width:1px;height:19px;background:#D4D4D4;"></div><div class="a" style="left:745px;top:785px;width:1px;height:19px;background:#D4D4D4;"></div><div class="a" style="left:925px;top:785px;width:1px;height:19px;background:#D4D4D4;"></div><div class="a" style="left:1105px;top:785px;width:1px;height:19px;background:#D4D4D4;"></div><div class="a" style="left:1285px;top:785px;width:1px;height:19px;background:#D4D4D4;"></div><div class="a" style="left:1465px;top:785px;width:1px;height:19px;background:#D4D4D4;"></div><div class="a" style="left:1645px;top:785px;width:1px;height:19px;background:#D4D4D4;"></div><div class="a" style="left:26px;top:784px;width:1872px;height:1px;background:#A2B4C6;"></div><div class="a" style="left:0px;top:784px;width:25px;height:1px;background:#C8C8C8;"></div><div class="t" style="left:5.50px;top:789.49px;font-size:13.6px;line-height:13.6px;color:#222;transform:scaleX(0.9256);">31</div><div class="a" style="left:26px;top:785px;width:179px;height:19px;overflow:hidden"><div class="t" style="left:110.00px;top:4.49px;font-size:13.6px;line-height:13.6px;color:#000;transform:scaleX(0.9467);-webkit-text-stroke:0.25px #000;">41,6395789</div></div><div class="a" style="left:206px;top:785px;width:179px;height:19px;overflow:hidden"><div class="t" style="left:112.41px;top:4.49px;font-size:13.6px;line-height:13.6px;color:#000;transform:scaleX(0.9534);-webkit-text-stroke:0.25px #000;">-0,9723145</div></div><div class="a" style="left:386px;top:785px;width:179px;height:19px;overflow:hidden"><div class="t" style="left:2.00px;top:4.49px;font-size:13.6px;line-height:13.6px;color:#000;transform:scaleX(0.9892);-webkit-text-stroke:0.25px #000;">Escuela de Educación Infantil</div></div><div class="a" style="left:566px;top:785px;width:179px;height:19px;overflow:hidden"><div class="t" style="left:2.00px;top:4.49px;font-size:13.6px;line-height:13.6px;color:#000;transform:scaleX(0.9263);-webkit-text-stroke:0.25px #000;">ARAGÓN</div></div><div class="a" style="left:746px;top:785px;width:179px;height:19px;overflow:hidden"><div class="t" style="left:2.00px;top:4.49px;font-size:13.6px;line-height:13.6px;color:#000;transform:scaleX(0.9524);-webkit-text-stroke:0.25px #000;">Zaragoza</div></div><div class="a" style="left:926px;top:785px;width:179px;height:19px;overflow:hidden"><div class="t" style="left:2.00px;top:4.49px;font-size:13.6px;line-height:13.6px;color:#000;transform:scaleX(0.9524);-webkit-text-stroke:0.25px #000;">Zaragoza</div></div><div class="a" style="left:1106px;top:785px;width:179px;height:19px;overflow:hidden"><div class="t" style="left:2.00px;top:4.49px;font-size:13.6px;line-height:13.6px;color:#000;transform:scaleX(0.9147);-webkit-text-stroke:0.25px #000;">CL. ENRIQUE VAL, 4-LOCAL. 50015</div></div><div class="a" style="left:1286px;top:785px;width:179px;height:19px;overflow:hidden"><div class="t" style="left:2.00px;top:4.49px;font-size:13.6px;line-height:13.6px;color:#000;transform:scaleX(1.0014);-webkit-text-stroke:0.25px #000;">Centro Privado - Concertado</div></div><div class="a" style="left:1466px;top:785px;width:179px;height:19px;overflow:hidden"><div class="t" style="left:2.00px;top:4.49px;font-size:13.6px;line-height:13.6px;color:#000;transform:scaleX(0.9602);-webkit-text-stroke:0.25px #000;">Educación Básica</div></div><div class="a" style="left:26px;top:805px;width:1872px;height:19px;background:#DDEBF7;"></div><div class="a" style="left:26px;top:804px;width:1872px;height:1px;background:#A2B4C6;"></div><div class="a" style="left:0px;top:804px;width:25px;height:1px;background:#C8C8C8;"></div><div class="t" style="left:5.50px;top:809.49px;font-size:13.6px;line-height:13.6px;color:#222;transform:scaleX(0.9256);">32</div><div class="a" style="left:26px;top:805px;width:179px;height:19px;overflow:hidden"><div class="t" style="left:110.00px;top:4.49px;font-size:13.6px;line-height:13.6px;color:#000;transform:scaleX(0.9467);-webkit-text-stroke:0.25px #000;">41,6564029</div></div><div class="a" style="left:206px;top:805px;width:179px;height:19px;overflow:hidden"><div class="t" style="left:112.41px;top:4.49px;font-size:13.6px;line-height:13.6px;color:#000;transform:scaleX(0.9534);-webkit-text-stroke:0.25px #000;">-0,8915678</div></div><div class="a" style="left:386px;top:805px;width:179px;height:19px;overflow:hidden"><div class="t" style="left:2.00px;top:4.49px;font-size:13.6px;line-height:13.6px;color:#000;transform:scaleX(0.9443);-webkit-text-stroke:0.25px #000;">EPA O.S.C.U.S. Zaragoza (Centro)</div></div><div class="a" style="left:566px;top:805px;width:179px;height:19px;overflow:hidden"><div class="t" style="left:2.00px;top:4.49px;font-size:13.6px;line-height:13.6px;color:#000;transform:scaleX(0.9263);-webkit-text-stroke:0.25px #000;">ARAGÓN</div></div><div class="a" style="left:746px;top:805px;width:179px;height:19px;overflow:hidden"><div class="t" style="left:2.00px;top:4.49px;font-size:13.6px;line-height:13.6px;color:#000;transform:scaleX(0.9524);-webkit-text-stroke:0.25px #000;">Zaragoza</div></div><div class="a" style="left:926px;top:805px;width:179px;height:19px;overflow:hidden"><div class="t" style="left:2.00px;top:4.49px;font-size:13.6px;line-height:13.6px;color:#000;transform:scaleX(0.9524);-webkit-text-stroke:0.25px #000;">Zaragoza</div></div><div class="a" style="left:1106px;top:805px;width:179px;height:19px;overflow:hidden"><div class="t" style="left:2.00px;top:4.49px;font-size:13.6px;line-height:13.6px;color:#000;transform:scaleX(0.9232);-webkit-text-stroke:0.25px #000;">CL. BOGGIERO,166. 50003.  Zaragoza</div></div><div class="a" style="left:1286px;top:805px;width:179px;height:19px;overflow:hidden"><div class="t" style="left:2.00px;top:4.49px;font-size:13.6px;line-height:13.6px;color:#000;transform:scaleX(1.0014);-webkit-text-stroke:0.25px #000;">Centro Privado - Concertado</div></div><div class="a" style="left:1466px;top:805px;width:179px;height:19px;overflow:hidden"><div class="t" style="left:2.00px;top:4.49px;font-size:13.6px;line-height:13.6px;color:#000;transform:scaleX(1.0019);-webkit-text-stroke:0.25px #000;">Educación de Adultos</div></div><div class="a" style="left:26px;top:825px;width:1872px;height:19px;background:#FFFFFF;"></div><div class="a" style="left:205px;top:825px;width:1px;height:19px;background:#D4D4D4;"></div><div class="a" style="left:385px;top:825px;width:1px;height:19px;background:#D4D4D4;"></div><div class="a" style="left:565px;top:825px;width:1px;height:19px;background:#D4D4D4;"></div><div class="a" style="left:745px;top:825px;width:1px;height:19px;background:#D4D4D4;"></div><div class="a" style="left:925px;top:825px;width:1px;height:19px;background:#D4D4D4;"></div><div class="a" style="left:1105px;top:825px;width:1px;height:19px;background:#D4D4D4;"></div><div class="a" style="left:1285px;top:825px;width:1px;height:19px;background:#D4D4D4;"></div><div class="a" style="left:1465px;top:825px;width:1px;height:19px;background:#D4D4D4;"></div><div class="a" style="left:1645px;top:825px;width:1px;height:19px;background:#D4D4D4;"></div><div class="a" style="left:26px;top:824px;width:1872px;height:1px;background:#A2B4C6;"></div><div class="a" style="left:0px;top:824px;width:25px;height:1px;background:#C8C8C8;"></div><div class="t" style="left:5.50px;top:829.49px;font-size:13.6px;line-height:13.6px;color:#222;transform:scaleX(0.9256);">33</div><div class="a" style="left:26px;top:825px;width:179px;height:19px;overflow:hidden"><div class="t" style="left:131.00px;top:4.49px;font-size:13.6px;line-height:13.6px;color:#000;transform:scaleX(0.9564);-webkit-text-stroke:0.25px #000;">41,6657</div></div><div class="a" style="left:206px;top:825px;width:179px;height:19px;overflow:hidden"><div class="t" style="left:126.41px;top:4.49px;font-size:13.6px;line-height:13.6px;color:#000;transform:scaleX(0.9613);-webkit-text-stroke:0.25px #000;">-0,89159</div></div><div class="a" style="left:386px;top:825px;width:179px;height:19px;overflow:hidden"><div class="t" style="left:2.00px;top:4.49px;font-size:13.6px;line-height:13.6px;color:#000;transform:scaleX(1.0063);-webkit-text-stroke:0.25px #000;">Centro Formación Profesional</div></div><div class="a" style="left:566px;top:825px;width:179px;height:19px;overflow:hidden"><div class="t" style="left:2.00px;top:4.49px;font-size:13.6px;line-height:13.6px;color:#000;transform:scaleX(0.9263);-webkit-text-stroke:0.25px #000;">ARAGÓN</div></div><div class="a" style="left:746px;top:825px;width:179px;height:19px;overflow:hidden"><div class="t" style="left:2.00px;top:4.49px;font-size:13.6px;line-height:13.6px;color:#000;transform:scaleX(0.9524);-webkit-text-stroke:0.25px #000;">Zaragoza</div></div><div class="a" style="left:926px;top:825px;width:179px;height:19px;overflow:hidden"><div class="t" style="left:2.00px;top:4.49px;font-size:13.6px;line-height:13.6px;color:#000;transform:scaleX(0.9524);-webkit-text-stroke:0.25px #000;">Zaragoza</div></div><div class="a" style="left:1106px;top:825px;width:179px;height:19px;overflow:hidden"><div class="t" style="left:2.00px;top:4.49px;font-size:13.6px;line-height:13.6px;color:#000;transform:scaleX(0.9756);-webkit-text-stroke:0.25px #000;">Calle Eduardo Jimeno Correas</div></div><div class="a" style="left:1286px;top:825px;width:179px;height:19px;overflow:hidden"><div class="t" style="left:2.00px;top:4.49px;font-size:13.6px;line-height:13.6px;color:#000;transform:scaleX(1.0044);-webkit-text-stroke:0.25px #000;">Centro Privado</div></div><div class="a" style="left:1466px;top:825px;width:179px;height:19px;overflow:hidden"><div class="t" style="left:2.00px;top:4.49px;font-size:13.6px;line-height:13.6px;color:#000;transform:scaleX(1.0061);-webkit-text-stroke:0.25px #000;">Formación Profesional</div></div><div class="a" style="left:26px;top:845px;width:1872px;height:19px;background:#DDEBF7;"></div><div class="a" style="left:26px;top:844px;width:1872px;height:1px;background:#A2B4C6;"></div><div class="a" style="left:0px;top:844px;width:25px;height:1px;background:#C8C8C8;"></div><div class="t" style="left:5.50px;top:849.49px;font-size:13.6px;line-height:13.6px;color:#222;transform:scaleX(0.9256);">34</div><div class="a" style="left:26px;top:845px;width:179px;height:19px;overflow:hidden"><div class="t" style="left:124.00px;top:4.49px;font-size:13.6px;line-height:13.6px;color:#000;transform:scaleX(0.9523);-webkit-text-stroke:0.25px #000;">41,62532</div></div><div class="a" style="left:206px;top:845px;width:179px;height:19px;overflow:hidden"><div class="t" style="left:126.41px;top:4.49px;font-size:13.6px;line-height:13.6px;color:#000;transform:scaleX(0.9613);-webkit-text-stroke:0.25px #000;">-0,89042</div></div><div class="a" style="left:386px;top:845px;width:179px;height:19px;overflow:hidden"><div class="t" style="left:2.00px;top:4.49px;font-size:13.6px;line-height:13.6px;color:#000;transform:scaleX(1.0063);-webkit-text-stroke:0.25px #000;">Centro Formación Profesional</div></div><div class="a" style="left:566px;top:845px;width:179px;height:19px;overflow:hidden"><div class="t" style="left:2.00px;top:4.49px;font-size:13.6px;line-height:13.6px;color:#000;transform:scaleX(0.9263);-webkit-text-stroke:0.25px #000;">ARAGÓN</div></div><div class="a" style="left:746px;top:845px;width:179px;height:19px;overflow:hidden"><div class="t" style="left:2.00px;top:4.49px;font-size:13.6px;line-height:13.6px;color:#000;transform:scaleX(0.9524);-webkit-text-stroke:0.25px #000;">Zaragoza</div></div><div class="a" style="left:926px;top:845px;width:179px;height:19px;overflow:hidden"><div class="t" style="left:2.00px;top:4.49px;font-size:13.6px;line-height:13.6px;color:#000;transform:scaleX(0.9524);-webkit-text-stroke:0.25px #000;">Zaragoza</div></div><div class="a" style="left:1106px;top:845px;width:179px;height:19px;overflow:hidden"><div class="t" style="left:2.00px;top:4.49px;font-size:13.6px;line-height:13.6px;color:#000;transform:scaleX(0.9741);-webkit-text-stroke:0.25px #000;">Calle Fray Julián Garcés, núm</div></div><div class="a" style="left:1286px;top:845px;width:179px;height:19px;overflow:hidden"><div class="t" style="left:2.00px;top:4.49px;font-size:13.6px;line-height:13.6px;color:#000;transform:scaleX(1.0044);-webkit-text-stroke:0.25px #000;">Centro Privado</div></div><div class="a" style="left:1466px;top:845px;width:179px;height:19px;overflow:hidden"><div class="t" style="left:2.00px;top:4.49px;font-size:13.6px;line-height:13.6px;color:#000;transform:scaleX(1.0061);-webkit-text-stroke:0.25px #000;">Formación Profesional</div></div><div class="a" style="left:26px;top:865px;width:1872px;height:19px;background:#FFFFFF;"></div><div class="a" style="left:205px;top:865px;width:1px;height:19px;background:#D4D4D4;"></div><div class="a" style="left:385px;top:865px;width:1px;height:19px;background:#D4D4D4;"></div><div class="a" style="left:565px;top:865px;width:1px;height:19px;background:#D4D4D4;"></div><div class="a" style="left:745px;top:865px;width:1px;height:19px;background:#D4D4D4;"></div><div class="a" style="left:925px;top:865px;width:1px;height:19px;background:#D4D4D4;"></div><div class="a" style="left:1105px;top:865px;width:1px;height:19px;background:#D4D4D4;"></div><div class="a" style="left:1285px;top:865px;width:1px;height:19px;background:#D4D4D4;"></div><div class="a" style="left:1465px;top:865px;width:1px;height:19px;background:#D4D4D4;"></div><div class="a" style="left:1645px;top:865px;width:1px;height:19px;background:#D4D4D4;"></div><div class="a" style="left:26px;top:864px;width:1872px;height:1px;background:#A2B4C6;"></div><div class="a" style="left:0px;top:864px;width:25px;height:1px;background:#C8C8C8;"></div><div class="t" style="left:5.50px;top:869.49px;font-size:13.6px;line-height:13.6px;color:#222;transform:scaleX(0.9256);">35</div><div class="a" style="left:26px;top:865px;width:179px;height:19px;overflow:hidden"><div class="t" style="left:110.00px;top:4.49px;font-size:13.6px;line-height:13.6px;color:#000;transform:scaleX(0.9467);-webkit-text-stroke:0.25px #000;">41,6659403</div></div><div class="a" style="left:206px;top:865px;width:179px;height:19px;overflow:hidden"><div class="t" style="left:112.41px;top:4.49px;font-size:13.6px;line-height:13.6px;color:#000;transform:scaleX(0.9534);-webkit-text-stroke:0.25px #000;">-0,8270937</div></div><div class="a" style="left:386px;top:865px;width:179px;height:19px;overflow:hidden"><div class="t" style="left:2.00px;top:4.49px;font-size:13.6px;line-height:13.6px;color:#000;transform:scaleX(0.9892);-webkit-text-stroke:0.25px #000;">Escuela de Educación Infantil</div></div><div class="a" style="left:566px;top:865px;width:179px;height:19px;overflow:hidden"><div class="t" style="left:2.00px;top:4.49px;font-size:13.6px;line-height:13.6px;color:#000;transform:scaleX(0.9263);-webkit-text-stroke:0.25px #000;">ARAGÓN</div></div><div class="a" style="left:746px;top:865px;width:179px;height:19px;overflow:hidden"><div class="t" style="left:2.00px;top:4.49px;font-size:13.6px;line-height:13.6px;color:#000;transform:scaleX(0.9524);-webkit-text-stroke:0.25px #000;">Zaragoza</div></div><div class="a" style="left:926px;top:865px;width:179px;height:19px;overflow:hidden"><div class="t" style="left:2.00px;top:4.49px;font-size:13.6px;line-height:13.6px;color:#000;transform:scaleX(0.9524);-webkit-text-stroke:0.25px #000;">Zaragoza</div></div><div class="a" style="left:1106px;top:865px;width:179px;height:19px;overflow:hidden"><div class="t" style="left:2.00px;top:4.49px;font-size:13.6px;line-height:13.6px;color:#000;transform:scaleX(0.9120);-webkit-text-stroke:0.25px #000;">CL. GABRIEL Y GALÁN, 16. 50017</div></div><div class="a" style="left:1286px;top:865px;width:179px;height:19px;overflow:hidden"><div class="t" style="left:2.00px;top:4.49px;font-size:13.6px;line-height:13.6px;color:#000;transform:scaleX(1.0014);-webkit-text-stroke:0.25px #000;">Centro Privado - Concertado</div></div><div class="a" style="left:1466px;top:865px;width:179px;height:19px;overflow:hidden"><div class="t" style="left:2.00px;top:4.49px;font-size:13.6px;line-height:13.6px;color:#000;transform:scaleX(0.9602);-webkit-text-stroke:0.25px #000;">Educación Básica</div></div><div class="a" style="left:26px;top:885px;width:1872px;height:19px;background:#DDEBF7;"></div><div class="a" style="left:26px;top:884px;width:1872px;height:1px;background:#A2B4C6;"></div><div class="a" style="left:0px;top:884px;width:25px;height:1px;background:#C8C8C8;"></div><div class="t" style="left:5.50px;top:889.49px;font-size:13.6px;line-height:13.6px;color:#222;transform:scaleX(0.9256);">36</div><div class="a" style="left:26px;top:885px;width:179px;height:19px;overflow:hidden"><div class="t" style="left:110.00px;top:4.49px;font-size:13.6px;line-height:13.6px;color:#000;transform:scaleX(0.9467);-webkit-text-stroke:0.25px #000;">43,2826265</div></div><div class="a" style="left:206px;top:885px;width:179px;height:19px;overflow:hidden"><div class="t" style="left:112.41px;top:4.49px;font-size:13.6px;line-height:13.6px;color:#000;transform:scaleX(0.9534);-webkit-text-stroke:0.25px #000;">-2,8602867</div></div><div class="a" style="left:386px;top:885px;width:179px;height:19px;overflow:hidden"><div class="t" style="left:2.00px;top:4.49px;font-size:13.6px;line-height:13.6px;color:#000;transform:scaleX(0.9892);-webkit-text-stroke:0.25px #000;">Escuela de Educación Infantil</div></div><div class="a" style="left:566px;top:885px;width:179px;height:19px;overflow:hidden"><div class="t" style="left:2.00px;top:4.49px;font-size:13.6px;line-height:13.6px;color:#000;transform:scaleX(0.9026);-webkit-text-stroke:0.25px #000;">PAÍS VASCO</div></div><div class="a" style="left:746px;top:885px;width:179px;height:19px;overflow:hidden"><div class="t" style="left:2.00px;top:4.49px;font-size:13.6px;line-height:13.6px;color:#000;transform:scaleX(0.9582);-webkit-text-stroke:0.25px #000;">Vizcaya</div></div><div class="a" style="left:926px;top:885px;width:179px;height:19px;overflow:hidden"><div class="t" style="left:2.00px;top:4.49px;font-size:13.6px;line-height:13.6px;color:#000;transform:scaleX(1.0078);-webkit-text-stroke:0.25px #000;">Zamudio</div></div><div class="a" style="left:1106px;top:885px;width:179px;height:19px;overflow:hidden"><div class="t" style="left:2.00px;top:4.49px;font-size:13.6px;line-height:13.6px;color:#000;transform:scaleX(0.9641);-webkit-text-stroke:0.25px #000;">ENARA, 2. 48170.  Arteaga (Sarriena)</div></div><div class="a" style="left:1286px;top:885px;width:179px;height:19px;overflow:hidden"><div class="t" style="left:2.00px;top:4.49px;font-size:13.6px;line-height:13.6px;color:#000;transform:scaleX(1.0042);-webkit-text-stroke:0.25px #000;">Centro Público</div></div><div class="a" style="left:1466px;top:885px;width:179px;height:19px;overflow:hidden"><div class="t" style="left:2.00px;top:4.49px;font-size:13.6px;line-height:13.6px;color:#000;transform:scaleX(0.9602);-webkit-text-stroke:0.25px #000;">Educación Básica</div></div><div class="a" style="left:1646px;top:885px;width:252px;height:19px;overflow:hidden"><div class="t" style="left:2.00px;top:4.49px;font-size:13.6px;line-height:13.6px;color:#000;transform:scaleX(0.9990);-webkit-text-stroke:0.25px #000;">Gobierno Vasco</div></div><div class="a" style="left:26px;top:905px;width:1872px;height:19px;background:#FFFFFF;"></div><div class="a" style="left:205px;top:905px;width:1px;height:19px;background:#D4D4D4;"></div><div class="a" style="left:385px;top:905px;width:1px;height:19px;background:#D4D4D4;"></div><div class="a" style="left:565px;top:905px;width:1px;height:19px;background:#D4D4D4;"></div><div class="a" style="left:745px;top:905px;width:1px;height:19px;background:#D4D4D4;"></div><div class="a" style="left:925px;top:905px;width:1px;height:19px;background:#D4D4D4;"></div><div class="a" style="left:1105px;top:905px;width:1px;height:19px;background:#D4D4D4;"></div><div class="a" style="left:1285px;top:905px;width:1px;height:19px;background:#D4D4D4;"></div><div class="a" style="left:1465px;top:905px;width:1px;height:19px;background:#D4D4D4;"></div><div class="a" style="left:1645px;top:905px;width:1px;height:19px;background:#D4D4D4;"></div><div class="a" style="left:26px;top:904px;width:1872px;height:1px;background:#A2B4C6;"></div><div class="a" style="left:0px;top:904px;width:25px;height:1px;background:#C8C8C8;"></div><div class="t" style="left:5.50px;top:909.49px;font-size:13.6px;line-height:13.6px;color:#222;transform:scaleX(0.9256);">37</div><div class="a" style="left:26px;top:905px;width:179px;height:19px;overflow:hidden"><div class="t" style="left:110.00px;top:4.49px;font-size:13.6px;line-height:13.6px;color:#000;transform:scaleX(0.9467);-webkit-text-stroke:0.25px #000;">37,2731241</div></div><div class="a" style="left:206px;top:905px;width:179px;height:19px;overflow:hidden"><div class="t" style="left:112.41px;top:4.49px;font-size:13.6px;line-height:13.6px;color:#000;transform:scaleX(0.9534);-webkit-text-stroke:0.25px #000;">-5,9240873</div></div><div class="a" style="left:386px;top:905px;width:179px;height:19px;overflow:hidden"><div class="t" style="left:2.00px;top:4.49px;font-size:13.6px;line-height:13.6px;color:#000;transform:scaleX(0.9889);-webkit-text-stroke:0.25px #000;">Colegio María Zambrano Dos Hermanas</div></div><div class="a" style="left:566px;top:905px;width:179px;height:19px;overflow:hidden"><div class="t" style="left:2.00px;top:4.49px;font-size:13.6px;line-height:13.6px;color:#000;transform:scaleX(0.9337);-webkit-text-stroke:0.25px #000;">ANDALUCÍA</div></div><div class="a" style="left:746px;top:905px;width:179px;height:19px;overflow:hidden"><div class="t" style="left:2.00px;top:4.49px;font-size:13.6px;line-height:13.6px;color:#000;transform:scaleX(0.9649);-webkit-text-stroke:0.25px #000;">Sevilla</div></div><div class="a" style="left:926px;top:905px;width:179px;height:19px;overflow:hidden"><div class="t" style="left:2.00px;top:4.49px;font-size:13.6px;line-height:13.6px;color:#000;transform:scaleX(0.9766);-webkit-text-stroke:0.25px #000;">Dos Hermanas</div></div><div class="a" style="left:1106px;top:905px;width:179px;height:19px;overflow:hidden"><div class="t" style="left:2.00px;top:4.49px;font-size:13.6px;line-height:13.6px;color:#000;transform:scaleX(0.9731);-webkit-text-stroke:0.25px #000;">Alarifes, 16. 41700.  Dos Hermanas</div></div><div class="a" style="left:1286px;top:905px;width:179px;height:19px;overflow:hidden"><div class="t" style="left:2.00px;top:4.49px;font-size:13.6px;line-height:13.6px;color:#000;transform:scaleX(1.0014);-webkit-text-stroke:0.25px #000;">Centro Privado - Concertado</div></div><div class="a" style="left:1466px;top:905px;width:179px;height:19px;overflow:hidden"><div class="t" style="left:2.00px;top:4.49px;font-size:13.6px;line-height:13.6px;color:#000;transform:scaleX(0.9602);-webkit-text-stroke:0.25px #000;">Educación Básica</div></div><div class="a" style="left:26px;top:925px;width:1872px;height:19px;background:#DDEBF7;"></div><div class="a" style="left:26px;top:924px;width:1872px;height:1px;background:#A2B4C6;"></div><div class="a" style="left:0px;top:924px;width:25px;height:1px;background:#C8C8C8;"></div><div class="t" style="left:5.50px;top:929.49px;font-size:13.6px;line-height:13.6px;color:#222;transform:scaleX(0.9256);">38</div><div class="a" style="left:26px;top:925px;width:179px;height:19px;overflow:hidden"><div class="t" style="left:110.00px;top:4.49px;font-size:13.6px;line-height:13.6px;color:#000;transform:scaleX(0.9467);-webkit-text-stroke:0.25px #000;">37,4014675</div></div><div class="a" style="left:206px;top:925px;width:179px;height:19px;overflow:hidden"><div class="t" style="left:112.41px;top:4.49px;font-size:13.6px;line-height:13.6px;color:#000;transform:scaleX(0.9534);-webkit-text-stroke:0.25px #000;">-5,9213993</div></div><div class="a" style="left:386px;top:925px;width:179px;height:19px;overflow:hidden"><div class="t" style="left:2.00px;top:4.49px;font-size:13.6px;line-height:13.6px;color:#000;transform:scaleX(0.9892);-webkit-text-stroke:0.25px #000;">Escuela de Educación Infantil</div></div><div class="a" style="left:566px;top:925px;width:179px;height:19px;overflow:hidden"><div class="t" style="left:2.00px;top:4.49px;font-size:13.6px;line-height:13.6px;color:#000;transform:scaleX(0.9337);-webkit-text-stroke:0.25px #000;">ANDALUCÍA</div></div><div class="a" style="left:746px;top:925px;width:179px;height:19px;overflow:hidden"><div class="t" style="left:2.00px;top:4.49px;font-size:13.6px;line-height:13.6px;color:#000;transform:scaleX(0.9649);-webkit-text-stroke:0.25px #000;">Sevilla</div></div><div class="a" style="left:926px;top:925px;width:179px;height:19px;overflow:hidden"><div class="t" style="left:2.00px;top:4.49px;font-size:13.6px;line-height:13.6px;color:#000;transform:scaleX(0.9649);-webkit-text-stroke:0.25px #000;">Sevilla</div></div><div class="a" style="left:1106px;top:925px;width:179px;height:19px;overflow:hidden"><div class="t" style="left:2.00px;top:4.49px;font-size:13.6px;line-height:13.6px;color:#000;transform:scaleX(1.0109);-webkit-text-stroke:0.25px #000;">Médicos sin Fronteras, 31, bajo</div></div><div class="a" style="left:1286px;top:925px;width:179px;height:19px;overflow:hidden"><div class="t" style="left:2.00px;top:4.49px;font-size:13.6px;line-height:13.6px;color:#000;transform:scaleX(1.0014);-webkit-text-stroke:0.25px #000;">Centro Privado - Concertado</div></div><div class="a" style="left:1466px;top:925px;width:179px;height:19px;overflow:hidden"><div class="t" style="left:2.00px;top:4.49px;font-size:13.6px;line-height:13.6px;color:#000;transform:scaleX(0.9602);-webkit-text-stroke:0.25px #000;">Educación Básica</div></div><div class="a" style="left:26px;top:945px;width:1872px;height:19px;background:#FFFFFF;"></div><div class="a" style="left:205px;top:945px;width:1px;height:19px;background:#D4D4D4;"></div><div class="a" style="left:385px;top:945px;width:1px;height:19px;background:#D4D4D4;"></div><div class="a" style="left:565px;top:945px;width:1px;height:19px;background:#D4D4D4;"></div><div class="a" style="left:745px;top:945px;width:1px;height:19px;background:#D4D4D4;"></div><div class="a" style="left:925px;top:945px;width:1px;height:19px;background:#D4D4D4;"></div><div class="a" style="left:1105px;top:945px;width:1px;height:19px;background:#D4D4D4;"></div><div class="a" style="left:1285px;top:945px;width:1px;height:19px;background:#D4D4D4;"></div><div class="a" style="left:1465px;top:945px;width:1px;height:19px;background:#D4D4D4;"></div><div class="a" style="left:1645px;top:945px;width:1px;height:19px;background:#D4D4D4;"></div><div class="a" style="left:26px;top:944px;width:1872px;height:1px;background:#A2B4C6;"></div><div class="a" style="left:0px;top:944px;width:25px;height:1px;background:#C8C8C8;"></div><div class="t" style="left:5.50px;top:949.49px;font-size:13.6px;line-height:13.6px;color:#222;transform:scaleX(0.9256);">39</div><div class="a" style="left:26px;top:945px;width:179px;height:19px;overflow:hidden"><div class="t" style="left:110.00px;top:4.49px;font-size:13.6px;line-height:13.6px;color:#000;transform:scaleX(0.9467);-webkit-text-stroke:0.25px #000;">43,2410481</div></div><div class="a" style="left:206px;top:945px;width:179px;height:19px;overflow:hidden"><div class="t" style="left:112.41px;top:4.49px;font-size:13.6px;line-height:13.6px;color:#000;transform:scaleX(0.9534);-webkit-text-stroke:0.25px #000;">-2,9223468</div></div><div class="a" style="left:386px;top:945px;width:179px;height:19px;overflow:hidden"><div class="t" style="left:2.00px;top:4.49px;font-size:13.6px;line-height:13.6px;color:#000;transform:scaleX(0.9892);-webkit-text-stroke:0.25px #000;">Escuela de Educación Infantil</div></div><div class="a" style="left:566px;top:945px;width:179px;height:19px;overflow:hidden"><div class="t" style="left:2.00px;top:4.49px;font-size:13.6px;line-height:13.6px;color:#000;transform:scaleX(0.9026);-webkit-text-stroke:0.25px #000;">PAÍS VASCO</div></div><div class="a" style="left:746px;top:945px;width:179px;height:19px;overflow:hidden"><div class="t" style="left:2.00px;top:4.49px;font-size:13.6px;line-height:13.6px;color:#000;transform:scaleX(0.9582);-webkit-text-stroke:0.25px #000;">Vizcaya</div></div><div class="a" style="left:926px;top:945px;width:179px;height:19px;overflow:hidden"><div class="t" style="left:2.00px;top:4.49px;font-size:13.6px;line-height:13.6px;color:#000;transform:scaleX(1.0059);-webkit-text-stroke:0.25px #000;">Bilbao</div></div><div class="a" style="left:1106px;top:945px;width:179px;height:19px;overflow:hidden"><div class="t" style="left:2.00px;top:4.49px;font-size:13.6px;line-height:13.6px;color:#000;transform:scaleX(0.9564);-webkit-text-stroke:0.25px #000;">ZAMAKOLA, 174. 48000.  Bilbao</div></div><div class="a" style="left:1286px;top:945px;width:179px;height:19px;overflow:hidden"><div class="t" style="left:2.00px;top:4.49px;font-size:13.6px;line-height:13.6px;color:#000;transform:scaleX(1.0042);-webkit-text-stroke:0.25px #000;">Centro Público</div></div><div class="a" style="left:1466px;top:945px;width:179px;height:19px;overflow:hidden"><div class="t" style="left:2.00px;top:4.49px;font-size:13.6px;line-height:13.6px;color:#000;transform:scaleX(0.9602);-webkit-text-stroke:0.25px #000;">Educación Básica</div></div><div class="a" style="left:1646px;top:945px;width:252px;height:19px;overflow:hidden"><div class="t" style="left:2.00px;top:4.49px;font-size:13.6px;line-height:13.6px;color:#000;transform:scaleX(0.9990);-webkit-text-stroke:0.25px #000;">Gobierno Vasco</div></div><div class="a" style="left:1898px;top:184px;width:1px;height:776px;background:#8A8A8A;"></div><div class="a" style="left:0px;top:960px;width:1919px;height:25px;background:#E6E6E6;"></div><div class="a" style="left:0px;top:985px;width:1919px;height:1px;background:#D4D4D4;"></div><div class="a" style="left:0px;top:986px;width:1919px;height:2px;background:#F0F0F0;"></div><svg style="left:26px;top:968px" width="6" height="8" viewBox="0 0 6 8"><path d="M5 0.5L1 4L5 7.5Z" fill="#C0C0C0"/></svg><svg style="left:55px;top:968px" width="6" height="8" viewBox="0 0 6 8"><path d="M1 0.5L5 4L1 7.5Z" fill="#C0C0C0"/></svg><div class="a" style="left:0px;top:959px;width:1898px;height:1px;background:#9B9B9B;"></div><div class="a" style="left:100px;top:959px;width:60px;height:24px;background:#FFFFFF;"></div><div class="a" style="left:100px;top:959px;width:1px;height:24px;background:#A0A0A0;"></div><div class="a" style="left:159px;top:959px;width:1px;height:24px;background:#A0A0A0;"></div><div class="a" style="left:100px;top:981px;width:60px;height:2px;background:#217346;"></div><div class="t" style="left:113.00px;top:966.00px;font-size:13.0px;line-height:13.0px;color:#2A6A45;font-weight:700;transform:scaleX(0.9689);">Datos</div><svg style="left:192px;top:964px" width="18" height="18" viewBox="0 0 18 18"><circle cx="9" cy="9" r="7.5" fill="none" stroke="#888" stroke-width="1.5"/><path d="M9 4.5V13.5M4.5 9H13.5" stroke="#777" stroke-width="1.8"/></svg><div class="a" style="left:1152px;top:968px;width:1px;height:2px;background:#B8B8B8;"></div><div class="a" style="left:1152px;top:972px;width:1px;height:2px;background:#B8B8B8;"></div><div class="a" style="left:1152px;top:976px;width:1px;height:2px;background:#B8B8B8;"></div><div class="a" style="left:1169px;top:966px;width:15px;height:15px;background:#FFFFFF;border:1px solid #C6C6C6;box-sizing:border-box;"></div><svg style="left:1174px;top:969px" width="5" height="8" viewBox="0 0 5 8"><path d="M4.5 0.5L0.5 4L4.5 7.5Z" fill="#555"/></svg><div class="a" style="left:1150px;top:960px;width:769px;height:5px;background:#EAEAEA;"></div><div class="a" style="left:1184px;top:965px;width:700px;height:16px;background:#DEDEDE;"></div><div class="a" style="left:1515px;top:966px;width:258px;height:15px;background:#FFFFFF;border:1px solid #C6C6C6;box-sizing:border-box;"></div><div class="a" style="left:1884px;top:966px;width:15px;height:15px;background:#FFFFFF;border:1px solid #C6C6C6;box-sizing:border-box;"></div><svg style="left:1889px;top:969px" width="5" height="8" viewBox="0 0 5 8"><path d="M0.5 0.5L4.5 4L0.5 7.5Z" fill="#555"/></svg><div class="a" style="left:1899px;top:163px;width:20px;height:797px;background:#E6E6E6;"></div><div class="a" style="left:1899px;top:184px;width:4px;height:776px;background:#EBEBEB;"></div><div class="a" style="left:1903px;top:182px;width:16px;height:763px;background:#E0E0E0;"></div><div class="a" style="left:1902px;top:167px;width:15px;height:15px;background:#FFFFFF;border:1px solid #C6C6C6;box-sizing:border-box;"></div><svg style="left:1905px;top:171px" width="8" height="5" viewBox="0 0 8 5"><path d="M0.5 4.5L4 0.5L7.5 4.5Z" fill="#555"/></svg><div class="a" style="left:1902px;top:182px;width:15px;height:17px;background:#FFFFFF;border:1px solid #C6C6C6;box-sizing:border-box;"></div><div class="a" style="left:1902px;top:945px;width:15px;height:15px;background:#FFFFFF;border:1px solid #C6C6C6;box-sizing:border-box;"></div><svg style="left:1905px;top:950px" width="8" height="5" viewBox="0 0 8 5"><path d="M0.5 0.5L4 4.5L7.5 0.5Z" fill="#555"/></svg>
</body></html>
